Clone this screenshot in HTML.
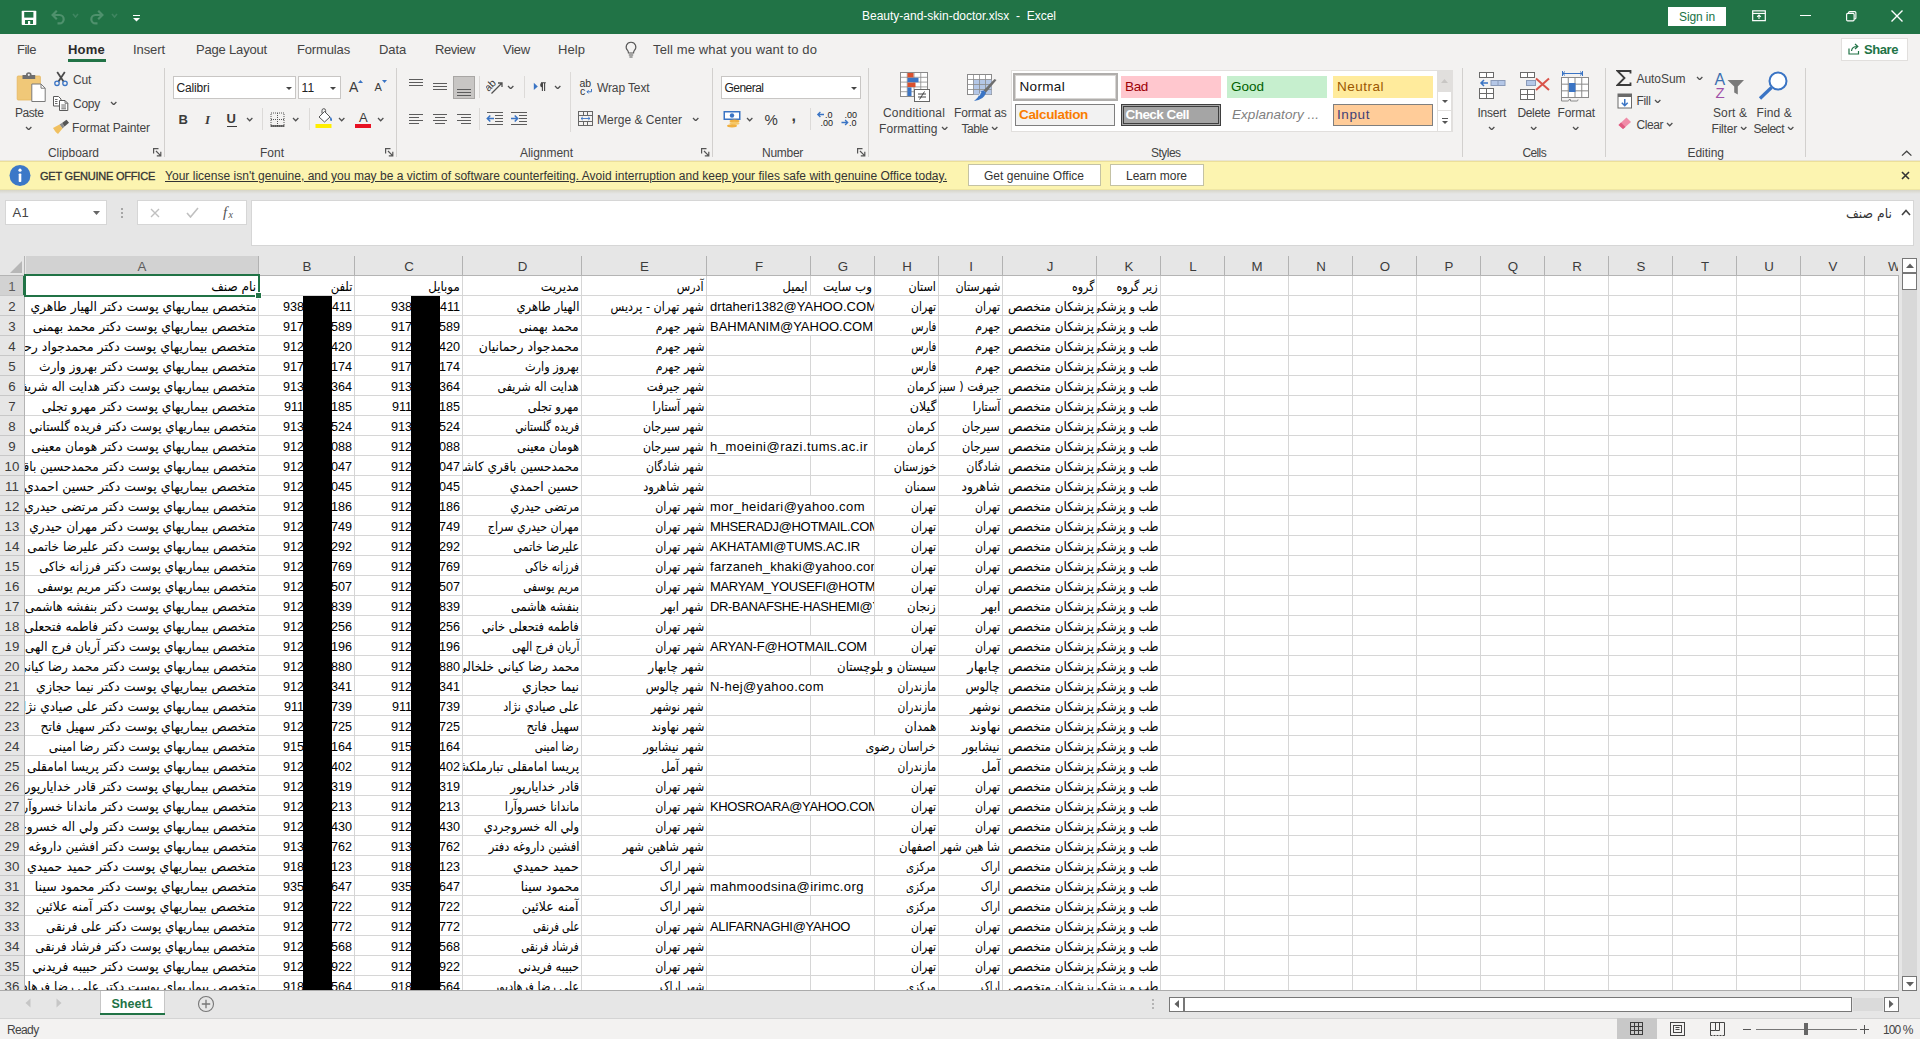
<!DOCTYPE html>
<html lang="en"><head><meta charset="utf-8"><title>Beauty-and-skin-doctor.xlsx - Excel</title>
<style>
html,body{margin:0;padding:0;}
body{width:1920px;height:1039px;overflow:hidden;position:relative;background:#fff;font-family:'Liberation Sans','DejaVu Sans',sans-serif;font-size:12px;color:#444;}
.a{position:absolute;}
.t{white-space:pre;}
.c{position:absolute;overflow:hidden;white-space:pre;}
</style></head>
<body>
<div class="a" style="left:0px;top:0px;width:1920px;height:34px;background:#217346;"></div>
<div class="a" style="left:0px;top:34px;width:1920px;height:127px;background:#f3f2f1;"></div>
<div class="a" style="left:0px;top:160px;width:1920px;height:1px;background:#e8e4d4;"></div>
<div class="a" style="left:0px;top:161px;width:1920px;height:29px;background:#fcf4b0;"></div>
<div class="a" style="left:0px;top:161px;width:1920px;height:1px;background:#ecdf9a;"></div>
<div class="a" style="left:0px;top:189px;width:1920px;height:1px;background:#efe6a4;"></div>
<div class="a" style="left:0px;top:190px;width:1920px;height:66px;background:#e6e6e6;"></div>
<div class="a" style="left:0;top:190px;width:1920px;height:4px;background:linear-gradient(#d6d4c8,#e6e6e6)"></div>
<div class="a" style="left:0px;top:990px;width:1920px;height:28px;background:#e6e6e6;"></div>
<div class="a" style="left:0px;top:990px;width:1899px;height:1px;background:#ababab;"></div>
<div class="a" style="left:0px;top:1018px;width:1920px;height:21px;background:#f3f2f1;"></div>
<div class="a" style="left:0px;top:1018px;width:1920px;height:1px;background:#d4d4d4;"></div>
<div class="a" style="left:0px;top:256px;width:1899px;height:20px;background:#e6e6e6;"></div>
<div class="a" style="left:25px;top:276px;width:1874px;height:714px;background:#fff;"></div>
<div class="a" style="left:0px;top:276px;width:25px;height:714px;background:#e6e6e6;"></div>
<div class="a" style="left:26px;top:256px;width:233px;height:19px;background:#d2d2d2;"></div>
<div class="a" style="left:0px;top:276px;width:24px;height:19px;background:#d2d2d2;"></div>
<div class="a" style="left:25px;top:295px;width:1874px;height:1px;background:#d6d6d6"></div><div class="a" style="left:0;top:295px;width:25px;height:1px;background:#c8c8c8"></div><div class="a" style="left:25px;top:315px;width:1874px;height:1px;background:#d6d6d6"></div><div class="a" style="left:0;top:315px;width:25px;height:1px;background:#c8c8c8"></div><div class="a" style="left:25px;top:335px;width:1874px;height:1px;background:#d6d6d6"></div><div class="a" style="left:0;top:335px;width:25px;height:1px;background:#c8c8c8"></div><div class="a" style="left:25px;top:355px;width:1874px;height:1px;background:#d6d6d6"></div><div class="a" style="left:0;top:355px;width:25px;height:1px;background:#c8c8c8"></div><div class="a" style="left:25px;top:375px;width:1874px;height:1px;background:#d6d6d6"></div><div class="a" style="left:0;top:375px;width:25px;height:1px;background:#c8c8c8"></div><div class="a" style="left:25px;top:395px;width:1874px;height:1px;background:#d6d6d6"></div><div class="a" style="left:0;top:395px;width:25px;height:1px;background:#c8c8c8"></div><div class="a" style="left:25px;top:415px;width:1874px;height:1px;background:#d6d6d6"></div><div class="a" style="left:0;top:415px;width:25px;height:1px;background:#c8c8c8"></div><div class="a" style="left:25px;top:435px;width:1874px;height:1px;background:#d6d6d6"></div><div class="a" style="left:0;top:435px;width:25px;height:1px;background:#c8c8c8"></div><div class="a" style="left:25px;top:455px;width:1874px;height:1px;background:#d6d6d6"></div><div class="a" style="left:0;top:455px;width:25px;height:1px;background:#c8c8c8"></div><div class="a" style="left:25px;top:475px;width:1874px;height:1px;background:#d6d6d6"></div><div class="a" style="left:0;top:475px;width:25px;height:1px;background:#c8c8c8"></div><div class="a" style="left:25px;top:495px;width:1874px;height:1px;background:#d6d6d6"></div><div class="a" style="left:0;top:495px;width:25px;height:1px;background:#c8c8c8"></div><div class="a" style="left:25px;top:515px;width:1874px;height:1px;background:#d6d6d6"></div><div class="a" style="left:0;top:515px;width:25px;height:1px;background:#c8c8c8"></div><div class="a" style="left:25px;top:535px;width:1874px;height:1px;background:#d6d6d6"></div><div class="a" style="left:0;top:535px;width:25px;height:1px;background:#c8c8c8"></div><div class="a" style="left:25px;top:555px;width:1874px;height:1px;background:#d6d6d6"></div><div class="a" style="left:0;top:555px;width:25px;height:1px;background:#c8c8c8"></div><div class="a" style="left:25px;top:575px;width:1874px;height:1px;background:#d6d6d6"></div><div class="a" style="left:0;top:575px;width:25px;height:1px;background:#c8c8c8"></div><div class="a" style="left:25px;top:595px;width:1874px;height:1px;background:#d6d6d6"></div><div class="a" style="left:0;top:595px;width:25px;height:1px;background:#c8c8c8"></div><div class="a" style="left:25px;top:615px;width:1874px;height:1px;background:#d6d6d6"></div><div class="a" style="left:0;top:615px;width:25px;height:1px;background:#c8c8c8"></div><div class="a" style="left:25px;top:635px;width:1874px;height:1px;background:#d6d6d6"></div><div class="a" style="left:0;top:635px;width:25px;height:1px;background:#c8c8c8"></div><div class="a" style="left:25px;top:655px;width:1874px;height:1px;background:#d6d6d6"></div><div class="a" style="left:0;top:655px;width:25px;height:1px;background:#c8c8c8"></div><div class="a" style="left:25px;top:675px;width:1874px;height:1px;background:#d6d6d6"></div><div class="a" style="left:0;top:675px;width:25px;height:1px;background:#c8c8c8"></div><div class="a" style="left:25px;top:695px;width:1874px;height:1px;background:#d6d6d6"></div><div class="a" style="left:0;top:695px;width:25px;height:1px;background:#c8c8c8"></div><div class="a" style="left:25px;top:715px;width:1874px;height:1px;background:#d6d6d6"></div><div class="a" style="left:0;top:715px;width:25px;height:1px;background:#c8c8c8"></div><div class="a" style="left:25px;top:735px;width:1874px;height:1px;background:#d6d6d6"></div><div class="a" style="left:0;top:735px;width:25px;height:1px;background:#c8c8c8"></div><div class="a" style="left:25px;top:755px;width:1874px;height:1px;background:#d6d6d6"></div><div class="a" style="left:0;top:755px;width:25px;height:1px;background:#c8c8c8"></div><div class="a" style="left:25px;top:775px;width:1874px;height:1px;background:#d6d6d6"></div><div class="a" style="left:0;top:775px;width:25px;height:1px;background:#c8c8c8"></div><div class="a" style="left:25px;top:795px;width:1874px;height:1px;background:#d6d6d6"></div><div class="a" style="left:0;top:795px;width:25px;height:1px;background:#c8c8c8"></div><div class="a" style="left:25px;top:815px;width:1874px;height:1px;background:#d6d6d6"></div><div class="a" style="left:0;top:815px;width:25px;height:1px;background:#c8c8c8"></div><div class="a" style="left:25px;top:835px;width:1874px;height:1px;background:#d6d6d6"></div><div class="a" style="left:0;top:835px;width:25px;height:1px;background:#c8c8c8"></div><div class="a" style="left:25px;top:855px;width:1874px;height:1px;background:#d6d6d6"></div><div class="a" style="left:0;top:855px;width:25px;height:1px;background:#c8c8c8"></div><div class="a" style="left:25px;top:875px;width:1874px;height:1px;background:#d6d6d6"></div><div class="a" style="left:0;top:875px;width:25px;height:1px;background:#c8c8c8"></div><div class="a" style="left:25px;top:895px;width:1874px;height:1px;background:#d6d6d6"></div><div class="a" style="left:0;top:895px;width:25px;height:1px;background:#c8c8c8"></div><div class="a" style="left:25px;top:915px;width:1874px;height:1px;background:#d6d6d6"></div><div class="a" style="left:0;top:915px;width:25px;height:1px;background:#c8c8c8"></div><div class="a" style="left:25px;top:935px;width:1874px;height:1px;background:#d6d6d6"></div><div class="a" style="left:0;top:935px;width:25px;height:1px;background:#c8c8c8"></div><div class="a" style="left:25px;top:955px;width:1874px;height:1px;background:#d6d6d6"></div><div class="a" style="left:0;top:955px;width:25px;height:1px;background:#c8c8c8"></div><div class="a" style="left:25px;top:975px;width:1874px;height:1px;background:#d6d6d6"></div><div class="a" style="left:0;top:975px;width:25px;height:1px;background:#c8c8c8"></div><div class="a" style="left:258px;top:276px;width:1px;height:714px;background:#d6d6d6"></div><div class="a" style="left:258px;top:256px;width:1px;height:20px;background:#b2b2b2"></div><div class="a" style="left:354px;top:276px;width:1px;height:714px;background:#d6d6d6"></div><div class="a" style="left:354px;top:256px;width:1px;height:20px;background:#b2b2b2"></div><div class="a" style="left:462px;top:276px;width:1px;height:714px;background:#d6d6d6"></div><div class="a" style="left:462px;top:256px;width:1px;height:20px;background:#b2b2b2"></div><div class="a" style="left:581px;top:276px;width:1px;height:714px;background:#d6d6d6"></div><div class="a" style="left:581px;top:256px;width:1px;height:20px;background:#b2b2b2"></div><div class="a" style="left:706px;top:276px;width:1px;height:714px;background:#d6d6d6"></div><div class="a" style="left:706px;top:256px;width:1px;height:20px;background:#b2b2b2"></div><div class="a" style="left:810px;top:276px;width:1px;height:714px;background:#d6d6d6"></div><div class="a" style="left:810px;top:256px;width:1px;height:20px;background:#b2b2b2"></div><div class="a" style="left:874px;top:276px;width:1px;height:714px;background:#d6d6d6"></div><div class="a" style="left:874px;top:256px;width:1px;height:20px;background:#b2b2b2"></div><div class="a" style="left:938px;top:276px;width:1px;height:714px;background:#d6d6d6"></div><div class="a" style="left:938px;top:256px;width:1px;height:20px;background:#b2b2b2"></div><div class="a" style="left:1002px;top:276px;width:1px;height:714px;background:#d6d6d6"></div><div class="a" style="left:1002px;top:256px;width:1px;height:20px;background:#b2b2b2"></div><div class="a" style="left:1096px;top:276px;width:1px;height:714px;background:#d6d6d6"></div><div class="a" style="left:1096px;top:256px;width:1px;height:20px;background:#b2b2b2"></div><div class="a" style="left:1160px;top:276px;width:1px;height:714px;background:#d6d6d6"></div><div class="a" style="left:1160px;top:256px;width:1px;height:20px;background:#b2b2b2"></div><div class="a" style="left:1224px;top:276px;width:1px;height:714px;background:#d6d6d6"></div><div class="a" style="left:1224px;top:256px;width:1px;height:20px;background:#b2b2b2"></div><div class="a" style="left:1288px;top:276px;width:1px;height:714px;background:#d6d6d6"></div><div class="a" style="left:1288px;top:256px;width:1px;height:20px;background:#b2b2b2"></div><div class="a" style="left:1352px;top:276px;width:1px;height:714px;background:#d6d6d6"></div><div class="a" style="left:1352px;top:256px;width:1px;height:20px;background:#b2b2b2"></div><div class="a" style="left:1416px;top:276px;width:1px;height:714px;background:#d6d6d6"></div><div class="a" style="left:1416px;top:256px;width:1px;height:20px;background:#b2b2b2"></div><div class="a" style="left:1480px;top:276px;width:1px;height:714px;background:#d6d6d6"></div><div class="a" style="left:1480px;top:256px;width:1px;height:20px;background:#b2b2b2"></div><div class="a" style="left:1544px;top:276px;width:1px;height:714px;background:#d6d6d6"></div><div class="a" style="left:1544px;top:256px;width:1px;height:20px;background:#b2b2b2"></div><div class="a" style="left:1608px;top:276px;width:1px;height:714px;background:#d6d6d6"></div><div class="a" style="left:1608px;top:256px;width:1px;height:20px;background:#b2b2b2"></div><div class="a" style="left:1672px;top:276px;width:1px;height:714px;background:#d6d6d6"></div><div class="a" style="left:1672px;top:256px;width:1px;height:20px;background:#b2b2b2"></div><div class="a" style="left:1736px;top:276px;width:1px;height:714px;background:#d6d6d6"></div><div class="a" style="left:1736px;top:256px;width:1px;height:20px;background:#b2b2b2"></div><div class="a" style="left:1800px;top:276px;width:1px;height:714px;background:#d6d6d6"></div><div class="a" style="left:1800px;top:256px;width:1px;height:20px;background:#b2b2b2"></div><div class="a" style="left:1864px;top:276px;width:1px;height:714px;background:#d6d6d6"></div><div class="a" style="left:1864px;top:256px;width:1px;height:20px;background:#b2b2b2"></div>
<div class="a" style="left:0px;top:275px;width:1899px;height:1px;background:#b4b4b4;"></div>
<div class="a" style="left:24px;top:256px;width:1px;height:734px;background:#b4b4b4;"></div>
<svg class="a" style="left:9px;top:260px;" width="14" height="14" viewBox="0 0 14 14"><path d="M13 1 L13 13 L1 13 Z" fill="#b7b7b7"/></svg>
<div class="a t" style="left:25px;top:258px;width:234px;text-align:center;font-size:13.3px;line-height:18px;color:#5c5c5c">A</div>
<div class="a t" style="left:259px;top:258px;width:96px;text-align:center;font-size:13.3px;line-height:18px;color:#3c3c3c">B</div>
<div class="a t" style="left:355px;top:258px;width:108px;text-align:center;font-size:13.3px;line-height:18px;color:#3c3c3c">C</div>
<div class="a t" style="left:463px;top:258px;width:119px;text-align:center;font-size:13.3px;line-height:18px;color:#3c3c3c">D</div>
<div class="a t" style="left:582px;top:258px;width:125px;text-align:center;font-size:13.3px;line-height:18px;color:#3c3c3c">E</div>
<div class="a t" style="left:707px;top:258px;width:104px;text-align:center;font-size:13.3px;line-height:18px;color:#3c3c3c">F</div>
<div class="a t" style="left:811px;top:258px;width:64px;text-align:center;font-size:13.3px;line-height:18px;color:#3c3c3c">G</div>
<div class="a t" style="left:875px;top:258px;width:64px;text-align:center;font-size:13.3px;line-height:18px;color:#3c3c3c">H</div>
<div class="a t" style="left:939px;top:258px;width:64px;text-align:center;font-size:13.3px;line-height:18px;color:#3c3c3c">I</div>
<div class="a t" style="left:1003px;top:258px;width:94px;text-align:center;font-size:13.3px;line-height:18px;color:#3c3c3c">J</div>
<div class="a t" style="left:1097px;top:258px;width:64px;text-align:center;font-size:13.3px;line-height:18px;color:#3c3c3c">K</div>
<div class="a t" style="left:1161px;top:258px;width:64px;text-align:center;font-size:13.3px;line-height:18px;color:#3c3c3c">L</div>
<div class="a t" style="left:1225px;top:258px;width:64px;text-align:center;font-size:13.3px;line-height:18px;color:#3c3c3c">M</div>
<div class="a t" style="left:1289px;top:258px;width:64px;text-align:center;font-size:13.3px;line-height:18px;color:#3c3c3c">N</div>
<div class="a t" style="left:1353px;top:258px;width:64px;text-align:center;font-size:13.3px;line-height:18px;color:#3c3c3c">O</div>
<div class="a t" style="left:1417px;top:258px;width:64px;text-align:center;font-size:13.3px;line-height:18px;color:#3c3c3c">P</div>
<div class="a t" style="left:1481px;top:258px;width:64px;text-align:center;font-size:13.3px;line-height:18px;color:#3c3c3c">Q</div>
<div class="a t" style="left:1545px;top:258px;width:64px;text-align:center;font-size:13.3px;line-height:18px;color:#3c3c3c">R</div>
<div class="a t" style="left:1609px;top:258px;width:64px;text-align:center;font-size:13.3px;line-height:18px;color:#3c3c3c">S</div>
<div class="a t" style="left:1673px;top:258px;width:64px;text-align:center;font-size:13.3px;line-height:18px;color:#3c3c3c">T</div>
<div class="a t" style="left:1737px;top:258px;width:64px;text-align:center;font-size:13.3px;line-height:18px;color:#3c3c3c">U</div>
<div class="a t" style="left:1801px;top:258px;width:64px;text-align:center;font-size:13.3px;line-height:18px;color:#3c3c3c">V</div>
<div class="c" style="left:1866px;top:256px;width:32px;height:19px;"><div class="a t" style="left:22px;top:2px;font-size:13.3px;line-height:18px;color:#444">W</div></div>
<div class="c" style="left:0;top:276px;width:24px;height:19px;text-align:center;font-size:13.3px;line-height:22px;color:#5c5c5c">1</div>
<div class="c" style="left:0;top:296px;width:24px;height:19px;text-align:center;font-size:13.3px;line-height:22px;color:#3c3c3c">2</div>
<div class="c" style="left:0;top:316px;width:24px;height:19px;text-align:center;font-size:13.3px;line-height:22px;color:#3c3c3c">3</div>
<div class="c" style="left:0;top:336px;width:24px;height:19px;text-align:center;font-size:13.3px;line-height:22px;color:#3c3c3c">4</div>
<div class="c" style="left:0;top:356px;width:24px;height:19px;text-align:center;font-size:13.3px;line-height:22px;color:#3c3c3c">5</div>
<div class="c" style="left:0;top:376px;width:24px;height:19px;text-align:center;font-size:13.3px;line-height:22px;color:#3c3c3c">6</div>
<div class="c" style="left:0;top:396px;width:24px;height:19px;text-align:center;font-size:13.3px;line-height:22px;color:#3c3c3c">7</div>
<div class="c" style="left:0;top:416px;width:24px;height:19px;text-align:center;font-size:13.3px;line-height:22px;color:#3c3c3c">8</div>
<div class="c" style="left:0;top:436px;width:24px;height:19px;text-align:center;font-size:13.3px;line-height:22px;color:#3c3c3c">9</div>
<div class="c" style="left:0;top:456px;width:24px;height:19px;text-align:center;font-size:13.3px;line-height:22px;color:#3c3c3c">10</div>
<div class="c" style="left:0;top:476px;width:24px;height:19px;text-align:center;font-size:13.3px;line-height:22px;color:#3c3c3c">11</div>
<div class="c" style="left:0;top:496px;width:24px;height:19px;text-align:center;font-size:13.3px;line-height:22px;color:#3c3c3c">12</div>
<div class="c" style="left:0;top:516px;width:24px;height:19px;text-align:center;font-size:13.3px;line-height:22px;color:#3c3c3c">13</div>
<div class="c" style="left:0;top:536px;width:24px;height:19px;text-align:center;font-size:13.3px;line-height:22px;color:#3c3c3c">14</div>
<div class="c" style="left:0;top:556px;width:24px;height:19px;text-align:center;font-size:13.3px;line-height:22px;color:#3c3c3c">15</div>
<div class="c" style="left:0;top:576px;width:24px;height:19px;text-align:center;font-size:13.3px;line-height:22px;color:#3c3c3c">16</div>
<div class="c" style="left:0;top:596px;width:24px;height:19px;text-align:center;font-size:13.3px;line-height:22px;color:#3c3c3c">17</div>
<div class="c" style="left:0;top:616px;width:24px;height:19px;text-align:center;font-size:13.3px;line-height:22px;color:#3c3c3c">18</div>
<div class="c" style="left:0;top:636px;width:24px;height:19px;text-align:center;font-size:13.3px;line-height:22px;color:#3c3c3c">19</div>
<div class="c" style="left:0;top:656px;width:24px;height:19px;text-align:center;font-size:13.3px;line-height:22px;color:#3c3c3c">20</div>
<div class="c" style="left:0;top:676px;width:24px;height:19px;text-align:center;font-size:13.3px;line-height:22px;color:#3c3c3c">21</div>
<div class="c" style="left:0;top:696px;width:24px;height:19px;text-align:center;font-size:13.3px;line-height:22px;color:#3c3c3c">22</div>
<div class="c" style="left:0;top:716px;width:24px;height:19px;text-align:center;font-size:13.3px;line-height:22px;color:#3c3c3c">23</div>
<div class="c" style="left:0;top:736px;width:24px;height:19px;text-align:center;font-size:13.3px;line-height:22px;color:#3c3c3c">24</div>
<div class="c" style="left:0;top:756px;width:24px;height:19px;text-align:center;font-size:13.3px;line-height:22px;color:#3c3c3c">25</div>
<div class="c" style="left:0;top:776px;width:24px;height:19px;text-align:center;font-size:13.3px;line-height:22px;color:#3c3c3c">26</div>
<div class="c" style="left:0;top:796px;width:24px;height:19px;text-align:center;font-size:13.3px;line-height:22px;color:#3c3c3c">27</div>
<div class="c" style="left:0;top:816px;width:24px;height:19px;text-align:center;font-size:13.3px;line-height:22px;color:#3c3c3c">28</div>
<div class="c" style="left:0;top:836px;width:24px;height:19px;text-align:center;font-size:13.3px;line-height:22px;color:#3c3c3c">29</div>
<div class="c" style="left:0;top:856px;width:24px;height:19px;text-align:center;font-size:13.3px;line-height:22px;color:#3c3c3c">30</div>
<div class="c" style="left:0;top:876px;width:24px;height:19px;text-align:center;font-size:13.3px;line-height:22px;color:#3c3c3c">31</div>
<div class="c" style="left:0;top:896px;width:24px;height:19px;text-align:center;font-size:13.3px;line-height:22px;color:#3c3c3c">32</div>
<div class="c" style="left:0;top:916px;width:24px;height:19px;text-align:center;font-size:13.3px;line-height:22px;color:#3c3c3c">33</div>
<div class="c" style="left:0;top:936px;width:24px;height:19px;text-align:center;font-size:13.3px;line-height:22px;color:#3c3c3c">34</div>
<div class="c" style="left:0;top:956px;width:24px;height:19px;text-align:center;font-size:13.3px;line-height:22px;color:#3c3c3c">35</div>
<div class="c" style="left:0;top:976px;width:24px;height:14px;text-align:center;font-size:13.3px;line-height:22px;color:#3c3c3c">36</div>
<div class="c" style="left:25px;top:276px;width:233px;height:19px"><div class="a t" dir="rtl" style="right:2px;top:1px;font-size:13px;line-height:20px;font-family:'DejaVu Sans','Liberation Sans',sans-serif;color:#000;transform:scaleX(0.9339);transform-origin:right">نام صنف</div></div>
<div class="c" style="left:259px;top:276px;width:95px;height:19px"><div class="a t" dir="rtl" style="right:2px;top:1px;font-size:13px;line-height:20px;font-family:'DejaVu Sans','Liberation Sans',sans-serif;color:#000;transform:scaleX(0.8912);transform-origin:right">تلفن</div></div>
<div class="c" style="left:355px;top:276px;width:107px;height:19px"><div class="a t" dir="rtl" style="right:2px;top:1px;font-size:13px;line-height:20px;font-family:'DejaVu Sans','Liberation Sans',sans-serif;color:#000;transform:scaleX(0.9069);transform-origin:right">موبايل</div></div>
<div class="c" style="left:463px;top:276px;width:118px;height:19px"><div class="a t" dir="rtl" style="right:2px;top:1px;font-size:13px;line-height:20px;font-family:'DejaVu Sans','Liberation Sans',sans-serif;color:#000;transform:scaleX(0.9336);transform-origin:right">مديريت</div></div>
<div class="c" style="left:582px;top:276px;width:124px;height:19px"><div class="a t" dir="rtl" style="right:2px;top:1px;font-size:13px;line-height:20px;font-family:'DejaVu Sans','Liberation Sans',sans-serif;color:#000;transform:scaleX(0.8475);transform-origin:right">آدرس</div></div>
<div class="c" style="left:707px;top:276px;width:103px;height:19px"><div class="a t" dir="rtl" style="right:2px;top:1px;font-size:13px;line-height:20px;font-family:'DejaVu Sans','Liberation Sans',sans-serif;color:#000;transform:scaleX(0.8767);transform-origin:right">ايميل</div></div>
<div class="c" style="left:811px;top:276px;width:63px;height:19px"><div class="a t" dir="rtl" style="right:2px;top:1px;font-size:13px;line-height:20px;font-family:'DejaVu Sans','Liberation Sans',sans-serif;color:#000;transform:scaleX(0.9092);transform-origin:right">وب سايت</div></div>
<div class="c" style="left:875px;top:276px;width:63px;height:19px"><div class="a t" dir="rtl" style="right:2px;top:1px;font-size:13px;line-height:20px;font-family:'DejaVu Sans','Liberation Sans',sans-serif;color:#000;transform:scaleX(0.8611);transform-origin:right">استان</div></div>
<div class="c" style="left:939px;top:276px;width:63px;height:19px"><div class="a t" dir="rtl" style="right:2px;top:1px;font-size:13px;line-height:20px;font-family:'DejaVu Sans','Liberation Sans',sans-serif;color:#000;transform:scaleX(0.8589);transform-origin:right">شهرستان</div></div>
<div class="c" style="left:1003px;top:276px;width:93px;height:19px"><div class="a t" dir="rtl" style="right:2px;top:1px;font-size:13px;line-height:20px;font-family:'DejaVu Sans','Liberation Sans',sans-serif;color:#000;transform:scaleX(0.8506);transform-origin:right">گروه</div></div>
<div class="c" style="left:1097px;top:276px;width:63px;height:19px"><div class="a t" dir="rtl" style="right:2px;top:1px;font-size:13px;line-height:20px;font-family:'DejaVu Sans','Liberation Sans',sans-serif;color:#000;transform:scaleX(0.8656);transform-origin:right">زير گروه</div></div>
<div class="c" style="left:25px;top:296px;width:233px;height:19px"><div class="a t" dir="rtl" style="right:2px;top:1px;font-size:13px;line-height:20px;font-family:'DejaVu Sans','Liberation Sans',sans-serif;color:#000;transform:scaleX(0.9437);transform-origin:right">متخصص بيماريهاي پوست دكتر الهيار طاهري</div></div>
<div class="c" style="left:259px;top:296px;width:95px;height:19px;color:#000;font-size:12.6px;line-height:20px"><span class="a" style="right:50px;top:1px">938</span><span class="a" style="right:2px;top:1px">411</span></div>
<div class="c" style="left:355px;top:296px;width:107px;height:19px;color:#000;font-size:12.6px;line-height:20px"><span class="a" style="right:50px;top:1px">938</span><span class="a" style="right:2px;top:1px">411</span></div>
<div class="c" style="left:463px;top:296px;width:118px;height:19px"><div class="a t" dir="rtl" style="right:2px;top:1px;font-size:13px;line-height:20px;font-family:'DejaVu Sans','Liberation Sans',sans-serif;color:#000;transform:scaleX(0.8952);transform-origin:right">الهيار طاهري</div></div>
<div class="c" style="left:582px;top:296px;width:124px;height:19px"><div class="a t" dir="rtl" style="right:2px;top:1px;font-size:13px;line-height:20px;font-family:'DejaVu Sans','Liberation Sans',sans-serif;color:#000;transform:scaleX(0.8646);transform-origin:right">شهر تهران - پرديس</div></div>
<div class="a" style="left:810px;top:296px;width:1px;height:19px;background:#fff;"></div>
<div class="c" style="left:707px;top:296px;width:167px;height:19px"><div class="a t" style="left:3px;top:1px;font-size:13px;line-height:20px;font-family:'Liberation Sans','DejaVu Sans',sans-serif;color:#000;letter-spacing:0.040px;">drtaheri1382@YAHOO.COM</div></div>
<div class="c" style="left:875px;top:296px;width:63px;height:19px"><div class="a t" dir="rtl" style="right:2px;top:1px;font-size:13px;line-height:20px;font-family:'DejaVu Sans','Liberation Sans',sans-serif;color:#000;transform:scaleX(0.8346);transform-origin:right">تهران</div></div>
<div class="c" style="left:939px;top:296px;width:63px;height:19px"><div class="a t" dir="rtl" style="right:2px;top:1px;font-size:13px;line-height:20px;font-family:'DejaVu Sans','Liberation Sans',sans-serif;color:#000;transform:scaleX(0.8346);transform-origin:right">تهران</div></div>
<div class="c" style="left:1003px;top:296px;width:93px;height:19px"><div class="a t" dir="rtl" style="right:2px;top:1px;font-size:13px;line-height:20px;font-family:'DejaVu Sans','Liberation Sans',sans-serif;color:#000;transform:scaleX(0.9249);transform-origin:right">پزشكان متخصص</div></div>
<div class="c" style="left:1097px;top:296px;width:63px;height:19px"><div class="a t" dir="rtl" style="right:2px;top:1px;font-size:13px;line-height:20px;font-family:'DejaVu Sans','Liberation Sans',sans-serif;color:#000;transform:scaleX(0.86);transform-origin:right">طب و پزشكي</div></div>
<div class="c" style="left:25px;top:316px;width:233px;height:19px"><div class="a t" dir="rtl" style="right:2px;top:1px;font-size:13px;line-height:20px;font-family:'DejaVu Sans','Liberation Sans',sans-serif;color:#000;transform:scaleX(0.9496);transform-origin:right">متخصص بيماريهاي پوست دكتر محمد بهمنی</div></div>
<div class="c" style="left:259px;top:316px;width:95px;height:19px;color:#000;font-size:12.6px;line-height:20px"><span class="a" style="right:50px;top:1px">917</span><span class="a" style="right:2px;top:1px">589</span></div>
<div class="c" style="left:355px;top:316px;width:107px;height:19px;color:#000;font-size:12.6px;line-height:20px"><span class="a" style="right:50px;top:1px">917</span><span class="a" style="right:2px;top:1px">589</span></div>
<div class="c" style="left:463px;top:316px;width:118px;height:19px"><div class="a t" dir="rtl" style="right:2px;top:1px;font-size:13px;line-height:20px;font-family:'DejaVu Sans','Liberation Sans',sans-serif;color:#000;transform:scaleX(0.913);transform-origin:right">محمد بهمنی</div></div>
<div class="c" style="left:582px;top:316px;width:124px;height:19px"><div class="a t" dir="rtl" style="right:2px;top:1px;font-size:13px;line-height:20px;font-family:'DejaVu Sans','Liberation Sans',sans-serif;color:#000;transform:scaleX(0.8485);transform-origin:right">شهر جهرم</div></div>
<div class="a" style="left:810px;top:316px;width:1px;height:19px;background:#fff;"></div>
<div class="c" style="left:707px;top:316px;width:167px;height:19px"><div class="a t" style="left:3px;top:1px;font-size:13px;line-height:20px;font-family:'Liberation Sans','DejaVu Sans',sans-serif;color:#000;letter-spacing:-0.010px;">BAHMANIM@YAHOO.COM</div></div>
<div class="c" style="left:875px;top:316px;width:63px;height:19px"><div class="a t" dir="rtl" style="right:2px;top:1px;font-size:13px;line-height:20px;font-family:'DejaVu Sans','Liberation Sans',sans-serif;color:#000;transform:scaleX(0.7733);transform-origin:right">فارس</div></div>
<div class="c" style="left:939px;top:316px;width:63px;height:19px"><div class="a t" dir="rtl" style="right:2px;top:1px;font-size:13px;line-height:20px;font-family:'DejaVu Sans','Liberation Sans',sans-serif;color:#000;transform:scaleX(0.8547);transform-origin:right">جهرم</div></div>
<div class="c" style="left:1003px;top:316px;width:93px;height:19px"><div class="a t" dir="rtl" style="right:2px;top:1px;font-size:13px;line-height:20px;font-family:'DejaVu Sans','Liberation Sans',sans-serif;color:#000;transform:scaleX(0.9249);transform-origin:right">پزشكان متخصص</div></div>
<div class="c" style="left:1097px;top:316px;width:63px;height:19px"><div class="a t" dir="rtl" style="right:2px;top:1px;font-size:13px;line-height:20px;font-family:'DejaVu Sans','Liberation Sans',sans-serif;color:#000;transform:scaleX(0.86);transform-origin:right">طب و پزشكي</div></div>
<div class="c" style="left:25px;top:336px;width:233px;height:19px"><div class="a t" dir="rtl" style="right:2px;top:1px;font-size:13px;line-height:20px;font-family:'DejaVu Sans','Liberation Sans',sans-serif;color:#000;transform:scaleX(0.9601);transform-origin:right">متخصص بيماريهاي پوست دكتر محمدجواد رحمانيان</div></div>
<div class="c" style="left:259px;top:336px;width:95px;height:19px;color:#000;font-size:12.6px;line-height:20px"><span class="a" style="right:50px;top:1px">912</span><span class="a" style="right:2px;top:1px">420</span></div>
<div class="c" style="left:355px;top:336px;width:107px;height:19px;color:#000;font-size:12.6px;line-height:20px"><span class="a" style="right:50px;top:1px">912</span><span class="a" style="right:2px;top:1px">420</span></div>
<div class="c" style="left:463px;top:336px;width:118px;height:19px"><div class="a t" dir="rtl" style="right:2px;top:1px;font-size:13px;line-height:20px;font-family:'DejaVu Sans','Liberation Sans',sans-serif;color:#000;transform:scaleX(0.9539);transform-origin:right">محمدجواد رحمانيان</div></div>
<div class="c" style="left:582px;top:336px;width:124px;height:19px"><div class="a t" dir="rtl" style="right:2px;top:1px;font-size:13px;line-height:20px;font-family:'DejaVu Sans','Liberation Sans',sans-serif;color:#000;transform:scaleX(0.8485);transform-origin:right">شهر جهرم</div></div>
<div class="c" style="left:707px;top:336px;width:231px;height:19px"><div class="a t" dir="rtl" style="right:2px;top:1px;font-size:13px;line-height:20px;font-family:'DejaVu Sans','Liberation Sans',sans-serif;color:#000;transform:scaleX(0.7733);transform-origin:right">فارس</div></div>
<div class="c" style="left:939px;top:336px;width:63px;height:19px"><div class="a t" dir="rtl" style="right:2px;top:1px;font-size:13px;line-height:20px;font-family:'DejaVu Sans','Liberation Sans',sans-serif;color:#000;transform:scaleX(0.8547);transform-origin:right">جهرم</div></div>
<div class="c" style="left:1003px;top:336px;width:93px;height:19px"><div class="a t" dir="rtl" style="right:2px;top:1px;font-size:13px;line-height:20px;font-family:'DejaVu Sans','Liberation Sans',sans-serif;color:#000;transform:scaleX(0.9249);transform-origin:right">پزشكان متخصص</div></div>
<div class="c" style="left:1097px;top:336px;width:63px;height:19px"><div class="a t" dir="rtl" style="right:2px;top:1px;font-size:13px;line-height:20px;font-family:'DejaVu Sans','Liberation Sans',sans-serif;color:#000;transform:scaleX(0.86);transform-origin:right">طب و پزشكي</div></div>
<div class="c" style="left:25px;top:356px;width:233px;height:19px"><div class="a t" dir="rtl" style="right:2px;top:1px;font-size:13px;line-height:20px;font-family:'DejaVu Sans','Liberation Sans',sans-serif;color:#000;transform:scaleX(0.9394);transform-origin:right">متخصص بيماريهاي پوست دكتر بهروز وارث</div></div>
<div class="c" style="left:259px;top:356px;width:95px;height:19px;color:#000;font-size:12.6px;line-height:20px"><span class="a" style="right:50px;top:1px">917</span><span class="a" style="right:2px;top:1px">174</span></div>
<div class="c" style="left:355px;top:356px;width:107px;height:19px;color:#000;font-size:12.6px;line-height:20px"><span class="a" style="right:50px;top:1px">917</span><span class="a" style="right:2px;top:1px">174</span></div>
<div class="c" style="left:463px;top:356px;width:118px;height:19px"><div class="a t" dir="rtl" style="right:2px;top:1px;font-size:13px;line-height:20px;font-family:'DejaVu Sans','Liberation Sans',sans-serif;color:#000;transform:scaleX(0.8725);transform-origin:right">بهروز وارث</div></div>
<div class="c" style="left:582px;top:356px;width:124px;height:19px"><div class="a t" dir="rtl" style="right:2px;top:1px;font-size:13px;line-height:20px;font-family:'DejaVu Sans','Liberation Sans',sans-serif;color:#000;transform:scaleX(0.8485);transform-origin:right">شهر جهرم</div></div>
<div class="c" style="left:707px;top:356px;width:231px;height:19px"><div class="a t" dir="rtl" style="right:2px;top:1px;font-size:13px;line-height:20px;font-family:'DejaVu Sans','Liberation Sans',sans-serif;color:#000;transform:scaleX(0.7733);transform-origin:right">فارس</div></div>
<div class="c" style="left:939px;top:356px;width:63px;height:19px"><div class="a t" dir="rtl" style="right:2px;top:1px;font-size:13px;line-height:20px;font-family:'DejaVu Sans','Liberation Sans',sans-serif;color:#000;transform:scaleX(0.8547);transform-origin:right">جهرم</div></div>
<div class="c" style="left:1003px;top:356px;width:93px;height:19px"><div class="a t" dir="rtl" style="right:2px;top:1px;font-size:13px;line-height:20px;font-family:'DejaVu Sans','Liberation Sans',sans-serif;color:#000;transform:scaleX(0.9249);transform-origin:right">پزشكان متخصص</div></div>
<div class="c" style="left:1097px;top:356px;width:63px;height:19px"><div class="a t" dir="rtl" style="right:2px;top:1px;font-size:13px;line-height:20px;font-family:'DejaVu Sans','Liberation Sans',sans-serif;color:#000;transform:scaleX(0.86);transform-origin:right">طب و پزشكي</div></div>
<div class="c" style="left:25px;top:376px;width:233px;height:19px"><div class="a t" dir="rtl" style="right:2px;top:1px;font-size:13px;line-height:20px;font-family:'DejaVu Sans','Liberation Sans',sans-serif;color:#000;transform:scaleX(0.9218);transform-origin:right">متخصص بيماريهاي پوست دكتر هدايت اله شريفی</div></div>
<div class="c" style="left:259px;top:376px;width:95px;height:19px;color:#000;font-size:12.6px;line-height:20px"><span class="a" style="right:50px;top:1px">913</span><span class="a" style="right:2px;top:1px">364</span></div>
<div class="c" style="left:355px;top:376px;width:107px;height:19px;color:#000;font-size:12.6px;line-height:20px"><span class="a" style="right:50px;top:1px">913</span><span class="a" style="right:2px;top:1px">364</span></div>
<div class="c" style="left:463px;top:376px;width:118px;height:19px"><div class="a t" dir="rtl" style="right:2px;top:1px;font-size:13px;line-height:20px;font-family:'DejaVu Sans','Liberation Sans',sans-serif;color:#000;transform:scaleX(0.8475);transform-origin:right">هدايت اله شريفی</div></div>
<div class="c" style="left:582px;top:376px;width:124px;height:19px"><div class="a t" dir="rtl" style="right:2px;top:1px;font-size:13px;line-height:20px;font-family:'DejaVu Sans','Liberation Sans',sans-serif;color:#000;transform:scaleX(0.8671);transform-origin:right">شهر جيرفت</div></div>
<div class="c" style="left:707px;top:376px;width:231px;height:19px"><div class="a t" dir="rtl" style="right:2px;top:1px;font-size:13px;line-height:20px;font-family:'DejaVu Sans','Liberation Sans',sans-serif;color:#000;transform:scaleX(0.8495);transform-origin:right">کرمان</div></div>
<div class="c" style="left:939px;top:376px;width:63px;height:19px"><div class="a t" dir="rtl" style="right:2px;top:1px;font-size:13px;line-height:20px;font-family:'DejaVu Sans','Liberation Sans',sans-serif;color:#000;transform:scaleX(0.86);transform-origin:right">جيرفت ( سبزواران )</div></div>
<div class="c" style="left:1003px;top:376px;width:93px;height:19px"><div class="a t" dir="rtl" style="right:2px;top:1px;font-size:13px;line-height:20px;font-family:'DejaVu Sans','Liberation Sans',sans-serif;color:#000;transform:scaleX(0.9249);transform-origin:right">پزشكان متخصص</div></div>
<div class="c" style="left:1097px;top:376px;width:63px;height:19px"><div class="a t" dir="rtl" style="right:2px;top:1px;font-size:13px;line-height:20px;font-family:'DejaVu Sans','Liberation Sans',sans-serif;color:#000;transform:scaleX(0.86);transform-origin:right">طب و پزشكي</div></div>
<div class="c" style="left:25px;top:396px;width:233px;height:19px"><div class="a t" dir="rtl" style="right:2px;top:1px;font-size:13px;line-height:20px;font-family:'DejaVu Sans','Liberation Sans',sans-serif;color:#000;transform:scaleX(0.9435);transform-origin:right">متخصص بيماريهاي پوست دكتر مهرو تجلی</div></div>
<div class="c" style="left:259px;top:396px;width:95px;height:19px;color:#000;font-size:12.6px;line-height:20px"><span class="a" style="right:50px;top:1px">911</span><span class="a" style="right:2px;top:1px">185</span></div>
<div class="c" style="left:355px;top:396px;width:107px;height:19px;color:#000;font-size:12.6px;line-height:20px"><span class="a" style="right:50px;top:1px">911</span><span class="a" style="right:2px;top:1px">185</span></div>
<div class="c" style="left:463px;top:396px;width:118px;height:19px"><div class="a t" dir="rtl" style="right:2px;top:1px;font-size:13px;line-height:20px;font-family:'DejaVu Sans','Liberation Sans',sans-serif;color:#000;transform:scaleX(0.8841);transform-origin:right">مهرو تجلی</div></div>
<div class="c" style="left:582px;top:396px;width:124px;height:19px"><div class="a t" dir="rtl" style="right:2px;top:1px;font-size:13px;line-height:20px;font-family:'DejaVu Sans','Liberation Sans',sans-serif;color:#000;transform:scaleX(0.8599);transform-origin:right">شهر آستارا</div></div>
<div class="c" style="left:707px;top:396px;width:231px;height:19px"><div class="a t" dir="rtl" style="right:2px;top:1px;font-size:13px;line-height:20px;font-family:'DejaVu Sans','Liberation Sans',sans-serif;color:#000;transform:scaleX(0.9755);transform-origin:right">گيلان</div></div>
<div class="c" style="left:939px;top:396px;width:63px;height:19px"><div class="a t" dir="rtl" style="right:2px;top:1px;font-size:13px;line-height:20px;font-family:'DejaVu Sans','Liberation Sans',sans-serif;color:#000;transform:scaleX(0.8519);transform-origin:right">آستارا</div></div>
<div class="c" style="left:1003px;top:396px;width:93px;height:19px"><div class="a t" dir="rtl" style="right:2px;top:1px;font-size:13px;line-height:20px;font-family:'DejaVu Sans','Liberation Sans',sans-serif;color:#000;transform:scaleX(0.9249);transform-origin:right">پزشكان متخصص</div></div>
<div class="c" style="left:1097px;top:396px;width:63px;height:19px"><div class="a t" dir="rtl" style="right:2px;top:1px;font-size:13px;line-height:20px;font-family:'DejaVu Sans','Liberation Sans',sans-serif;color:#000;transform:scaleX(0.86);transform-origin:right">طب و پزشكي</div></div>
<div class="c" style="left:25px;top:416px;width:233px;height:19px"><div class="a t" dir="rtl" style="right:2px;top:1px;font-size:13px;line-height:20px;font-family:'DejaVu Sans','Liberation Sans',sans-serif;color:#000;transform:scaleX(0.9141);transform-origin:right">متخصص بيماريهاي پوست دكتر فريده گلستاني</div></div>
<div class="c" style="left:259px;top:416px;width:95px;height:19px;color:#000;font-size:12.6px;line-height:20px"><span class="a" style="right:50px;top:1px">913</span><span class="a" style="right:2px;top:1px">524</span></div>
<div class="c" style="left:355px;top:416px;width:107px;height:19px;color:#000;font-size:12.6px;line-height:20px"><span class="a" style="right:50px;top:1px">913</span><span class="a" style="right:2px;top:1px">524</span></div>
<div class="c" style="left:463px;top:416px;width:118px;height:19px"><div class="a t" dir="rtl" style="right:2px;top:1px;font-size:13px;line-height:20px;font-family:'DejaVu Sans','Liberation Sans',sans-serif;color:#000;transform:scaleX(0.808);transform-origin:right">فريده گلستاني</div></div>
<div class="c" style="left:582px;top:416px;width:124px;height:19px"><div class="a t" dir="rtl" style="right:2px;top:1px;font-size:13px;line-height:20px;font-family:'DejaVu Sans','Liberation Sans',sans-serif;color:#000;transform:scaleX(0.8469);transform-origin:right">شهر سيرجان</div></div>
<div class="c" style="left:707px;top:416px;width:231px;height:19px"><div class="a t" dir="rtl" style="right:2px;top:1px;font-size:13px;line-height:20px;font-family:'DejaVu Sans','Liberation Sans',sans-serif;color:#000;transform:scaleX(0.8495);transform-origin:right">کرمان</div></div>
<div class="c" style="left:939px;top:416px;width:63px;height:19px"><div class="a t" dir="rtl" style="right:2px;top:1px;font-size:13px;line-height:20px;font-family:'DejaVu Sans','Liberation Sans',sans-serif;color:#000;transform:scaleX(0.8611);transform-origin:right">سيرجان</div></div>
<div class="c" style="left:1003px;top:416px;width:93px;height:19px"><div class="a t" dir="rtl" style="right:2px;top:1px;font-size:13px;line-height:20px;font-family:'DejaVu Sans','Liberation Sans',sans-serif;color:#000;transform:scaleX(0.9249);transform-origin:right">پزشكان متخصص</div></div>
<div class="c" style="left:1097px;top:416px;width:63px;height:19px"><div class="a t" dir="rtl" style="right:2px;top:1px;font-size:13px;line-height:20px;font-family:'DejaVu Sans','Liberation Sans',sans-serif;color:#000;transform:scaleX(0.86);transform-origin:right">طب و پزشكي</div></div>
<div class="c" style="left:25px;top:436px;width:233px;height:19px"><div class="a t" dir="rtl" style="right:2px;top:1px;font-size:13px;line-height:20px;font-family:'DejaVu Sans','Liberation Sans',sans-serif;color:#000;transform:scaleX(0.9406);transform-origin:right">متخصص بيماريهاي پوست دكتر هومان معينی</div></div>
<div class="c" style="left:259px;top:436px;width:95px;height:19px;color:#000;font-size:12.6px;line-height:20px"><span class="a" style="right:50px;top:1px">912</span><span class="a" style="right:2px;top:1px">088</span></div>
<div class="c" style="left:355px;top:436px;width:107px;height:19px;color:#000;font-size:12.6px;line-height:20px"><span class="a" style="right:50px;top:1px">912</span><span class="a" style="right:2px;top:1px">088</span></div>
<div class="c" style="left:463px;top:436px;width:118px;height:19px"><div class="a t" dir="rtl" style="right:2px;top:1px;font-size:13px;line-height:20px;font-family:'DejaVu Sans','Liberation Sans',sans-serif;color:#000;transform:scaleX(0.8845);transform-origin:right">هومان معينی</div></div>
<div class="c" style="left:582px;top:436px;width:124px;height:19px"><div class="a t" dir="rtl" style="right:2px;top:1px;font-size:13px;line-height:20px;font-family:'DejaVu Sans','Liberation Sans',sans-serif;color:#000;transform:scaleX(0.8469);transform-origin:right">شهر سيرجان</div></div>
<div class="a" style="left:810px;top:436px;width:1px;height:19px;background:#fff;"></div>
<div class="c" style="left:707px;top:436px;width:167px;height:19px"><div class="a t" style="left:3px;top:1px;font-size:13px;line-height:20px;font-family:'Liberation Sans','DejaVu Sans',sans-serif;color:#000;letter-spacing:0.464px;">h_moeini@razi.tums.ac.ir</div></div>
<div class="c" style="left:875px;top:436px;width:63px;height:19px"><div class="a t" dir="rtl" style="right:2px;top:1px;font-size:13px;line-height:20px;font-family:'DejaVu Sans','Liberation Sans',sans-serif;color:#000;transform:scaleX(0.8495);transform-origin:right">کرمان</div></div>
<div class="c" style="left:939px;top:436px;width:63px;height:19px"><div class="a t" dir="rtl" style="right:2px;top:1px;font-size:13px;line-height:20px;font-family:'DejaVu Sans','Liberation Sans',sans-serif;color:#000;transform:scaleX(0.8611);transform-origin:right">سيرجان</div></div>
<div class="c" style="left:1003px;top:436px;width:93px;height:19px"><div class="a t" dir="rtl" style="right:2px;top:1px;font-size:13px;line-height:20px;font-family:'DejaVu Sans','Liberation Sans',sans-serif;color:#000;transform:scaleX(0.9249);transform-origin:right">پزشكان متخصص</div></div>
<div class="c" style="left:1097px;top:436px;width:63px;height:19px"><div class="a t" dir="rtl" style="right:2px;top:1px;font-size:13px;line-height:20px;font-family:'DejaVu Sans','Liberation Sans',sans-serif;color:#000;transform:scaleX(0.86);transform-origin:right">طب و پزشكي</div></div>
<div class="c" style="left:25px;top:456px;width:233px;height:19px"><div class="a t" dir="rtl" style="right:2px;top:1px;font-size:13px;line-height:20px;font-family:'DejaVu Sans','Liberation Sans',sans-serif;color:#000;transform:scaleX(0.93);transform-origin:right">متخصص بيماريهاي پوست دكتر محمدحسين باقري كاشاني</div></div>
<div class="c" style="left:259px;top:456px;width:95px;height:19px;color:#000;font-size:12.6px;line-height:20px"><span class="a" style="right:50px;top:1px">912</span><span class="a" style="right:2px;top:1px">047</span></div>
<div class="c" style="left:355px;top:456px;width:107px;height:19px;color:#000;font-size:12.6px;line-height:20px"><span class="a" style="right:50px;top:1px">912</span><span class="a" style="right:2px;top:1px">047</span></div>
<div class="c" style="left:463px;top:456px;width:118px;height:19px"><div class="a t" dir="rtl" style="right:2px;top:1px;font-size:13px;line-height:20px;font-family:'DejaVu Sans','Liberation Sans',sans-serif;color:#000;transform:scaleX(0.93);transform-origin:right">محمدحسين باقري كاشاني</div></div>
<div class="c" style="left:582px;top:456px;width:124px;height:19px"><div class="a t" dir="rtl" style="right:2px;top:1px;font-size:13px;line-height:20px;font-family:'DejaVu Sans','Liberation Sans',sans-serif;color:#000;transform:scaleX(0.839);transform-origin:right">شهر شادگان</div></div>
<div class="c" style="left:707px;top:456px;width:231px;height:19px"><div class="a t" dir="rtl" style="right:2px;top:1px;font-size:13px;line-height:20px;font-family:'DejaVu Sans','Liberation Sans',sans-serif;color:#000;transform:scaleX(0.861);transform-origin:right">خوزستان</div></div>
<div class="c" style="left:939px;top:456px;width:63px;height:19px"><div class="a t" dir="rtl" style="right:2px;top:1px;font-size:13px;line-height:20px;font-family:'DejaVu Sans','Liberation Sans',sans-serif;color:#000;transform:scaleX(0.8428);transform-origin:right">شادگان</div></div>
<div class="c" style="left:1003px;top:456px;width:93px;height:19px"><div class="a t" dir="rtl" style="right:2px;top:1px;font-size:13px;line-height:20px;font-family:'DejaVu Sans','Liberation Sans',sans-serif;color:#000;transform:scaleX(0.9249);transform-origin:right">پزشكان متخصص</div></div>
<div class="c" style="left:1097px;top:456px;width:63px;height:19px"><div class="a t" dir="rtl" style="right:2px;top:1px;font-size:13px;line-height:20px;font-family:'DejaVu Sans','Liberation Sans',sans-serif;color:#000;transform:scaleX(0.86);transform-origin:right">طب و پزشكي</div></div>
<div class="c" style="left:25px;top:476px;width:233px;height:19px"><div class="a t" dir="rtl" style="right:2px;top:1px;font-size:13px;line-height:20px;font-family:'DejaVu Sans','Liberation Sans',sans-serif;color:#000;transform:scaleX(0.9552);transform-origin:right">متخصص بيماريهاي پوست دكتر حسين احمدي</div></div>
<div class="c" style="left:259px;top:476px;width:95px;height:19px;color:#000;font-size:12.6px;line-height:20px"><span class="a" style="right:50px;top:1px">912</span><span class="a" style="right:2px;top:1px">045</span></div>
<div class="c" style="left:355px;top:476px;width:107px;height:19px;color:#000;font-size:12.6px;line-height:20px"><span class="a" style="right:50px;top:1px">912</span><span class="a" style="right:2px;top:1px">045</span></div>
<div class="c" style="left:463px;top:476px;width:118px;height:19px"><div class="a t" dir="rtl" style="right:2px;top:1px;font-size:13px;line-height:20px;font-family:'DejaVu Sans','Liberation Sans',sans-serif;color:#000;transform:scaleX(0.9356);transform-origin:right">حسين احمدي</div></div>
<div class="c" style="left:582px;top:476px;width:124px;height:19px"><div class="a t" dir="rtl" style="right:2px;top:1px;font-size:13px;line-height:20px;font-family:'DejaVu Sans','Liberation Sans',sans-serif;color:#000;transform:scaleX(0.8823);transform-origin:right">شهر شاهرود</div></div>
<div class="c" style="left:707px;top:476px;width:231px;height:19px"><div class="a t" dir="rtl" style="right:2px;top:1px;font-size:13px;line-height:20px;font-family:'DejaVu Sans','Liberation Sans',sans-serif;color:#000;transform:scaleX(0.8649);transform-origin:right">سمنان</div></div>
<div class="c" style="left:939px;top:476px;width:63px;height:19px"><div class="a t" dir="rtl" style="right:2px;top:1px;font-size:13px;line-height:20px;font-family:'DejaVu Sans','Liberation Sans',sans-serif;color:#000;transform:scaleX(0.9401);transform-origin:right">شاهرود</div></div>
<div class="c" style="left:1003px;top:476px;width:93px;height:19px"><div class="a t" dir="rtl" style="right:2px;top:1px;font-size:13px;line-height:20px;font-family:'DejaVu Sans','Liberation Sans',sans-serif;color:#000;transform:scaleX(0.9249);transform-origin:right">پزشكان متخصص</div></div>
<div class="c" style="left:1097px;top:476px;width:63px;height:19px"><div class="a t" dir="rtl" style="right:2px;top:1px;font-size:13px;line-height:20px;font-family:'DejaVu Sans','Liberation Sans',sans-serif;color:#000;transform:scaleX(0.86);transform-origin:right">طب و پزشكي</div></div>
<div class="c" style="left:25px;top:496px;width:233px;height:19px"><div class="a t" dir="rtl" style="right:2px;top:1px;font-size:13px;line-height:20px;font-family:'DejaVu Sans','Liberation Sans',sans-serif;color:#000;transform:scaleX(0.9341);transform-origin:right">متخصص بيماريهاي پوست دكتر مرتضی حيدري</div></div>
<div class="c" style="left:259px;top:496px;width:95px;height:19px;color:#000;font-size:12.6px;line-height:20px"><span class="a" style="right:50px;top:1px">912</span><span class="a" style="right:2px;top:1px">186</span></div>
<div class="c" style="left:355px;top:496px;width:107px;height:19px;color:#000;font-size:12.6px;line-height:20px"><span class="a" style="right:50px;top:1px">912</span><span class="a" style="right:2px;top:1px">186</span></div>
<div class="c" style="left:463px;top:496px;width:118px;height:19px"><div class="a t" dir="rtl" style="right:2px;top:1px;font-size:13px;line-height:20px;font-family:'DejaVu Sans','Liberation Sans',sans-serif;color:#000;transform:scaleX(0.8708);transform-origin:right">مرتضی حيدري</div></div>
<div class="c" style="left:582px;top:496px;width:124px;height:19px"><div class="a t" dir="rtl" style="right:2px;top:1px;font-size:13px;line-height:20px;font-family:'DejaVu Sans','Liberation Sans',sans-serif;color:#000;transform:scaleX(0.8428);transform-origin:right">شهر تهران</div></div>
<div class="a" style="left:810px;top:496px;width:1px;height:19px;background:#fff;"></div>
<div class="c" style="left:707px;top:496px;width:167px;height:19px"><div class="a t" style="left:3px;top:1px;font-size:13px;line-height:20px;font-family:'Liberation Sans','DejaVu Sans',sans-serif;color:#000;letter-spacing:0.455px;">mor_heidari@yahoo.com</div></div>
<div class="c" style="left:875px;top:496px;width:63px;height:19px"><div class="a t" dir="rtl" style="right:2px;top:1px;font-size:13px;line-height:20px;font-family:'DejaVu Sans','Liberation Sans',sans-serif;color:#000;transform:scaleX(0.8346);transform-origin:right">تهران</div></div>
<div class="c" style="left:939px;top:496px;width:63px;height:19px"><div class="a t" dir="rtl" style="right:2px;top:1px;font-size:13px;line-height:20px;font-family:'DejaVu Sans','Liberation Sans',sans-serif;color:#000;transform:scaleX(0.8346);transform-origin:right">تهران</div></div>
<div class="c" style="left:1003px;top:496px;width:93px;height:19px"><div class="a t" dir="rtl" style="right:2px;top:1px;font-size:13px;line-height:20px;font-family:'DejaVu Sans','Liberation Sans',sans-serif;color:#000;transform:scaleX(0.9249);transform-origin:right">پزشكان متخصص</div></div>
<div class="c" style="left:1097px;top:496px;width:63px;height:19px"><div class="a t" dir="rtl" style="right:2px;top:1px;font-size:13px;line-height:20px;font-family:'DejaVu Sans','Liberation Sans',sans-serif;color:#000;transform:scaleX(0.86);transform-origin:right">طب و پزشكي</div></div>
<div class="c" style="left:25px;top:516px;width:233px;height:19px"><div class="a t" dir="rtl" style="right:2px;top:1px;font-size:13px;line-height:20px;font-family:'DejaVu Sans','Liberation Sans',sans-serif;color:#000;transform:scaleX(0.9368);transform-origin:right">متخصص بيماريهاي پوست دكتر مهران حيدري</div></div>
<div class="c" style="left:259px;top:516px;width:95px;height:19px;color:#000;font-size:12.6px;line-height:20px"><span class="a" style="right:50px;top:1px">912</span><span class="a" style="right:2px;top:1px">749</span></div>
<div class="c" style="left:355px;top:516px;width:107px;height:19px;color:#000;font-size:12.6px;line-height:20px"><span class="a" style="right:50px;top:1px">912</span><span class="a" style="right:2px;top:1px">749</span></div>
<div class="c" style="left:463px;top:516px;width:118px;height:19px"><div class="a t" dir="rtl" style="right:2px;top:1px;font-size:13px;line-height:20px;font-family:'DejaVu Sans','Liberation Sans',sans-serif;color:#000;transform:scaleX(0.8516);transform-origin:right">مهران حيدري سراج</div></div>
<div class="c" style="left:582px;top:516px;width:124px;height:19px"><div class="a t" dir="rtl" style="right:2px;top:1px;font-size:13px;line-height:20px;font-family:'DejaVu Sans','Liberation Sans',sans-serif;color:#000;transform:scaleX(0.8428);transform-origin:right">شهر تهران</div></div>
<div class="a" style="left:810px;top:516px;width:1px;height:19px;background:#fff;"></div>
<div class="c" style="left:707px;top:516px;width:167px;height:19px"><div class="a t" style="left:3px;top:1px;font-size:13px;line-height:20px;font-family:'Liberation Sans','DejaVu Sans',sans-serif;color:#000;letter-spacing:-0.347px;">MHSERADJ@HOTMAIL.COM</div></div>
<div class="c" style="left:875px;top:516px;width:63px;height:19px"><div class="a t" dir="rtl" style="right:2px;top:1px;font-size:13px;line-height:20px;font-family:'DejaVu Sans','Liberation Sans',sans-serif;color:#000;transform:scaleX(0.8346);transform-origin:right">تهران</div></div>
<div class="c" style="left:939px;top:516px;width:63px;height:19px"><div class="a t" dir="rtl" style="right:2px;top:1px;font-size:13px;line-height:20px;font-family:'DejaVu Sans','Liberation Sans',sans-serif;color:#000;transform:scaleX(0.8346);transform-origin:right">تهران</div></div>
<div class="c" style="left:1003px;top:516px;width:93px;height:19px"><div class="a t" dir="rtl" style="right:2px;top:1px;font-size:13px;line-height:20px;font-family:'DejaVu Sans','Liberation Sans',sans-serif;color:#000;transform:scaleX(0.9249);transform-origin:right">پزشكان متخصص</div></div>
<div class="c" style="left:1097px;top:516px;width:63px;height:19px"><div class="a t" dir="rtl" style="right:2px;top:1px;font-size:13px;line-height:20px;font-family:'DejaVu Sans','Liberation Sans',sans-serif;color:#000;transform:scaleX(0.86);transform-origin:right">طب و پزشكي</div></div>
<div class="c" style="left:25px;top:536px;width:233px;height:19px"><div class="a t" dir="rtl" style="right:2px;top:1px;font-size:13px;line-height:20px;font-family:'DejaVu Sans','Liberation Sans',sans-serif;color:#000;transform:scaleX(0.9333);transform-origin:right">متخصص بيماريهاي پوست دكتر عليرضا خاتمی</div></div>
<div class="c" style="left:259px;top:536px;width:95px;height:19px;color:#000;font-size:12.6px;line-height:20px"><span class="a" style="right:50px;top:1px">912</span><span class="a" style="right:2px;top:1px">292</span></div>
<div class="c" style="left:355px;top:536px;width:107px;height:19px;color:#000;font-size:12.6px;line-height:20px"><span class="a" style="right:50px;top:1px">912</span><span class="a" style="right:2px;top:1px">292</span></div>
<div class="c" style="left:463px;top:536px;width:118px;height:19px"><div class="a t" dir="rtl" style="right:2px;top:1px;font-size:13px;line-height:20px;font-family:'DejaVu Sans','Liberation Sans',sans-serif;color:#000;transform:scaleX(0.8654);transform-origin:right">عليرضا خاتمی</div></div>
<div class="c" style="left:582px;top:536px;width:124px;height:19px"><div class="a t" dir="rtl" style="right:2px;top:1px;font-size:13px;line-height:20px;font-family:'DejaVu Sans','Liberation Sans',sans-serif;color:#000;transform:scaleX(0.8428);transform-origin:right">شهر تهران</div></div>
<div class="a" style="left:810px;top:536px;width:1px;height:19px;background:#fff;"></div>
<div class="c" style="left:707px;top:536px;width:167px;height:19px"><div class="a t" style="left:3px;top:1px;font-size:13px;line-height:20px;font-family:'Liberation Sans','DejaVu Sans',sans-serif;color:#000;letter-spacing:-0.150px;">AKHATAMI@TUMS.AC.IR</div></div>
<div class="c" style="left:875px;top:536px;width:63px;height:19px"><div class="a t" dir="rtl" style="right:2px;top:1px;font-size:13px;line-height:20px;font-family:'DejaVu Sans','Liberation Sans',sans-serif;color:#000;transform:scaleX(0.8346);transform-origin:right">تهران</div></div>
<div class="c" style="left:939px;top:536px;width:63px;height:19px"><div class="a t" dir="rtl" style="right:2px;top:1px;font-size:13px;line-height:20px;font-family:'DejaVu Sans','Liberation Sans',sans-serif;color:#000;transform:scaleX(0.8346);transform-origin:right">تهران</div></div>
<div class="c" style="left:1003px;top:536px;width:93px;height:19px"><div class="a t" dir="rtl" style="right:2px;top:1px;font-size:13px;line-height:20px;font-family:'DejaVu Sans','Liberation Sans',sans-serif;color:#000;transform:scaleX(0.9249);transform-origin:right">پزشكان متخصص</div></div>
<div class="c" style="left:1097px;top:536px;width:63px;height:19px"><div class="a t" dir="rtl" style="right:2px;top:1px;font-size:13px;line-height:20px;font-family:'DejaVu Sans','Liberation Sans',sans-serif;color:#000;transform:scaleX(0.86);transform-origin:right">طب و پزشكي</div></div>
<div class="c" style="left:25px;top:556px;width:233px;height:19px"><div class="a t" dir="rtl" style="right:2px;top:1px;font-size:13px;line-height:20px;font-family:'DejaVu Sans','Liberation Sans',sans-serif;color:#000;transform:scaleX(0.9189);transform-origin:right">متخصص بيماريهاي پوست دكتر فرزانه خاکی</div></div>
<div class="c" style="left:259px;top:556px;width:95px;height:19px;color:#000;font-size:12.6px;line-height:20px"><span class="a" style="right:50px;top:1px">912</span><span class="a" style="right:2px;top:1px">769</span></div>
<div class="c" style="left:355px;top:556px;width:107px;height:19px;color:#000;font-size:12.6px;line-height:20px"><span class="a" style="right:50px;top:1px">912</span><span class="a" style="right:2px;top:1px">769</span></div>
<div class="c" style="left:463px;top:556px;width:118px;height:19px"><div class="a t" dir="rtl" style="right:2px;top:1px;font-size:13px;line-height:20px;font-family:'DejaVu Sans','Liberation Sans',sans-serif;color:#000;transform:scaleX(0.8056);transform-origin:right">فرزانه خاکی</div></div>
<div class="c" style="left:582px;top:556px;width:124px;height:19px"><div class="a t" dir="rtl" style="right:2px;top:1px;font-size:13px;line-height:20px;font-family:'DejaVu Sans','Liberation Sans',sans-serif;color:#000;transform:scaleX(0.8428);transform-origin:right">شهر تهران</div></div>
<div class="a" style="left:810px;top:556px;width:1px;height:19px;background:#fff;"></div>
<div class="c" style="left:707px;top:556px;width:167px;height:19px"><div class="a t" style="left:3px;top:1px;font-size:13px;line-height:20px;font-family:'Liberation Sans','DejaVu Sans',sans-serif;color:#000;letter-spacing:0.276px;">farzaneh_khaki@yahoo.com</div></div>
<div class="c" style="left:875px;top:556px;width:63px;height:19px"><div class="a t" dir="rtl" style="right:2px;top:1px;font-size:13px;line-height:20px;font-family:'DejaVu Sans','Liberation Sans',sans-serif;color:#000;transform:scaleX(0.8346);transform-origin:right">تهران</div></div>
<div class="c" style="left:939px;top:556px;width:63px;height:19px"><div class="a t" dir="rtl" style="right:2px;top:1px;font-size:13px;line-height:20px;font-family:'DejaVu Sans','Liberation Sans',sans-serif;color:#000;transform:scaleX(0.8346);transform-origin:right">تهران</div></div>
<div class="c" style="left:1003px;top:556px;width:93px;height:19px"><div class="a t" dir="rtl" style="right:2px;top:1px;font-size:13px;line-height:20px;font-family:'DejaVu Sans','Liberation Sans',sans-serif;color:#000;transform:scaleX(0.9249);transform-origin:right">پزشكان متخصص</div></div>
<div class="c" style="left:1097px;top:556px;width:63px;height:19px"><div class="a t" dir="rtl" style="right:2px;top:1px;font-size:13px;line-height:20px;font-family:'DejaVu Sans','Liberation Sans',sans-serif;color:#000;transform:scaleX(0.86);transform-origin:right">طب و پزشكي</div></div>
<div class="c" style="left:25px;top:576px;width:233px;height:19px"><div class="a t" dir="rtl" style="right:2px;top:1px;font-size:13px;line-height:20px;font-family:'DejaVu Sans','Liberation Sans',sans-serif;color:#000;transform:scaleX(0.919);transform-origin:right">متخصص بيماريهاي پوست دكتر مريم يوسفی</div></div>
<div class="c" style="left:259px;top:576px;width:95px;height:19px;color:#000;font-size:12.6px;line-height:20px"><span class="a" style="right:50px;top:1px">912</span><span class="a" style="right:2px;top:1px">507</span></div>
<div class="c" style="left:355px;top:576px;width:107px;height:19px;color:#000;font-size:12.6px;line-height:20px"><span class="a" style="right:50px;top:1px">912</span><span class="a" style="right:2px;top:1px">507</span></div>
<div class="c" style="left:463px;top:576px;width:118px;height:19px"><div class="a t" dir="rtl" style="right:2px;top:1px;font-size:13px;line-height:20px;font-family:'DejaVu Sans','Liberation Sans',sans-serif;color:#000;transform:scaleX(0.8094);transform-origin:right">مريم يوسفی</div></div>
<div class="c" style="left:582px;top:576px;width:124px;height:19px"><div class="a t" dir="rtl" style="right:2px;top:1px;font-size:13px;line-height:20px;font-family:'DejaVu Sans','Liberation Sans',sans-serif;color:#000;transform:scaleX(0.8428);transform-origin:right">شهر تهران</div></div>
<div class="a" style="left:810px;top:576px;width:1px;height:19px;background:#fff;"></div>
<div class="c" style="left:707px;top:576px;width:167px;height:19px"><div class="a t" style="left:3px;top:1px;font-size:13px;line-height:20px;font-family:'Liberation Sans','DejaVu Sans',sans-serif;color:#000;letter-spacing:-0.334px;">MARYAM_YOUSEFI@HOTMAIL.COM</div></div>
<div class="c" style="left:875px;top:576px;width:63px;height:19px"><div class="a t" dir="rtl" style="right:2px;top:1px;font-size:13px;line-height:20px;font-family:'DejaVu Sans','Liberation Sans',sans-serif;color:#000;transform:scaleX(0.8346);transform-origin:right">تهران</div></div>
<div class="c" style="left:939px;top:576px;width:63px;height:19px"><div class="a t" dir="rtl" style="right:2px;top:1px;font-size:13px;line-height:20px;font-family:'DejaVu Sans','Liberation Sans',sans-serif;color:#000;transform:scaleX(0.8346);transform-origin:right">تهران</div></div>
<div class="c" style="left:1003px;top:576px;width:93px;height:19px"><div class="a t" dir="rtl" style="right:2px;top:1px;font-size:13px;line-height:20px;font-family:'DejaVu Sans','Liberation Sans',sans-serif;color:#000;transform:scaleX(0.9249);transform-origin:right">پزشكان متخصص</div></div>
<div class="c" style="left:1097px;top:576px;width:63px;height:19px"><div class="a t" dir="rtl" style="right:2px;top:1px;font-size:13px;line-height:20px;font-family:'DejaVu Sans','Liberation Sans',sans-serif;color:#000;transform:scaleX(0.86);transform-origin:right">طب و پزشكي</div></div>
<div class="c" style="left:25px;top:596px;width:233px;height:19px"><div class="a t" dir="rtl" style="right:2px;top:1px;font-size:13px;line-height:20px;font-family:'DejaVu Sans','Liberation Sans',sans-serif;color:#000;transform:scaleX(0.939);transform-origin:right">متخصص بيماريهاي پوست دكتر بنفشه هاشمی</div></div>
<div class="c" style="left:259px;top:596px;width:95px;height:19px;color:#000;font-size:12.6px;line-height:20px"><span class="a" style="right:50px;top:1px">912</span><span class="a" style="right:2px;top:1px">839</span></div>
<div class="c" style="left:355px;top:596px;width:107px;height:19px;color:#000;font-size:12.6px;line-height:20px"><span class="a" style="right:50px;top:1px">912</span><span class="a" style="right:2px;top:1px">839</span></div>
<div class="c" style="left:463px;top:596px;width:118px;height:19px"><div class="a t" dir="rtl" style="right:2px;top:1px;font-size:13px;line-height:20px;font-family:'DejaVu Sans','Liberation Sans',sans-serif;color:#000;transform:scaleX(0.8844);transform-origin:right">بنفشه هاشمی</div></div>
<div class="c" style="left:582px;top:596px;width:124px;height:19px"><div class="a t" dir="rtl" style="right:2px;top:1px;font-size:13px;line-height:20px;font-family:'DejaVu Sans','Liberation Sans',sans-serif;color:#000;transform:scaleX(0.8746);transform-origin:right">شهر ابهر</div></div>
<div class="a" style="left:810px;top:596px;width:1px;height:19px;background:#fff;"></div>
<div class="c" style="left:707px;top:596px;width:167px;height:19px"><div class="a t" style="left:3px;top:1px;font-size:13px;line-height:20px;font-family:'Liberation Sans','DejaVu Sans',sans-serif;color:#000;letter-spacing:-0.375px;">DR-BANAFSHE-HASHEMI@YAHOO.COM</div></div>
<div class="c" style="left:875px;top:596px;width:63px;height:19px"><div class="a t" dir="rtl" style="right:2px;top:1px;font-size:13px;line-height:20px;font-family:'DejaVu Sans','Liberation Sans',sans-serif;color:#000;transform:scaleX(0.9042);transform-origin:right">زنجان</div></div>
<div class="c" style="left:939px;top:596px;width:63px;height:19px"><div class="a t" dir="rtl" style="right:2px;top:1px;font-size:13px;line-height:20px;font-family:'DejaVu Sans','Liberation Sans',sans-serif;color:#000;transform:scaleX(0.9311);transform-origin:right">ابهر</div></div>
<div class="c" style="left:1003px;top:596px;width:93px;height:19px"><div class="a t" dir="rtl" style="right:2px;top:1px;font-size:13px;line-height:20px;font-family:'DejaVu Sans','Liberation Sans',sans-serif;color:#000;transform:scaleX(0.9249);transform-origin:right">پزشكان متخصص</div></div>
<div class="c" style="left:1097px;top:596px;width:63px;height:19px"><div class="a t" dir="rtl" style="right:2px;top:1px;font-size:13px;line-height:20px;font-family:'DejaVu Sans','Liberation Sans',sans-serif;color:#000;transform:scaleX(0.86);transform-origin:right">طب و پزشكي</div></div>
<div class="c" style="left:25px;top:616px;width:233px;height:19px"><div class="a t" dir="rtl" style="right:2px;top:1px;font-size:13px;line-height:20px;font-family:'DejaVu Sans','Liberation Sans',sans-serif;color:#000;transform:scaleX(0.9326);transform-origin:right">متخصص بيماريهاي پوست دكتر فاطمه فتحعلی خاني</div></div>
<div class="c" style="left:259px;top:616px;width:95px;height:19px;color:#000;font-size:12.6px;line-height:20px"><span class="a" style="right:50px;top:1px">912</span><span class="a" style="right:2px;top:1px">256</span></div>
<div class="c" style="left:355px;top:616px;width:107px;height:19px;color:#000;font-size:12.6px;line-height:20px"><span class="a" style="right:50px;top:1px">912</span><span class="a" style="right:2px;top:1px">256</span></div>
<div class="c" style="left:463px;top:616px;width:118px;height:19px"><div class="a t" dir="rtl" style="right:2px;top:1px;font-size:13px;line-height:20px;font-family:'DejaVu Sans','Liberation Sans',sans-serif;color:#000;transform:scaleX(0.8845);transform-origin:right">فاطمه فتحعلی خاني</div></div>
<div class="c" style="left:582px;top:616px;width:124px;height:19px"><div class="a t" dir="rtl" style="right:2px;top:1px;font-size:13px;line-height:20px;font-family:'DejaVu Sans','Liberation Sans',sans-serif;color:#000;transform:scaleX(0.8428);transform-origin:right">شهر تهران</div></div>
<div class="c" style="left:707px;top:616px;width:231px;height:19px"><div class="a t" dir="rtl" style="right:2px;top:1px;font-size:13px;line-height:20px;font-family:'DejaVu Sans','Liberation Sans',sans-serif;color:#000;transform:scaleX(0.8346);transform-origin:right">تهران</div></div>
<div class="c" style="left:939px;top:616px;width:63px;height:19px"><div class="a t" dir="rtl" style="right:2px;top:1px;font-size:13px;line-height:20px;font-family:'DejaVu Sans','Liberation Sans',sans-serif;color:#000;transform:scaleX(0.8346);transform-origin:right">تهران</div></div>
<div class="c" style="left:1003px;top:616px;width:93px;height:19px"><div class="a t" dir="rtl" style="right:2px;top:1px;font-size:13px;line-height:20px;font-family:'DejaVu Sans','Liberation Sans',sans-serif;color:#000;transform:scaleX(0.9249);transform-origin:right">پزشكان متخصص</div></div>
<div class="c" style="left:1097px;top:616px;width:63px;height:19px"><div class="a t" dir="rtl" style="right:2px;top:1px;font-size:13px;line-height:20px;font-family:'DejaVu Sans','Liberation Sans',sans-serif;color:#000;transform:scaleX(0.86);transform-origin:right">طب و پزشكي</div></div>
<div class="c" style="left:25px;top:636px;width:233px;height:19px"><div class="a t" dir="rtl" style="right:2px;top:1px;font-size:13px;line-height:20px;font-family:'DejaVu Sans','Liberation Sans',sans-serif;color:#000;transform:scaleX(0.9199);transform-origin:right">متخصص بيماريهاي پوست دكتر آريان فرج الهی</div></div>
<div class="c" style="left:259px;top:636px;width:95px;height:19px;color:#000;font-size:12.6px;line-height:20px"><span class="a" style="right:50px;top:1px">912</span><span class="a" style="right:2px;top:1px">196</span></div>
<div class="c" style="left:355px;top:636px;width:107px;height:19px;color:#000;font-size:12.6px;line-height:20px"><span class="a" style="right:50px;top:1px">912</span><span class="a" style="right:2px;top:1px">196</span></div>
<div class="c" style="left:463px;top:636px;width:118px;height:19px"><div class="a t" dir="rtl" style="right:2px;top:1px;font-size:13px;line-height:20px;font-family:'DejaVu Sans','Liberation Sans',sans-serif;color:#000;transform:scaleX(0.8285);transform-origin:right">آريان فرج الهی</div></div>
<div class="c" style="left:582px;top:636px;width:124px;height:19px"><div class="a t" dir="rtl" style="right:2px;top:1px;font-size:13px;line-height:20px;font-family:'DejaVu Sans','Liberation Sans',sans-serif;color:#000;transform:scaleX(0.8428);transform-origin:right">شهر تهران</div></div>
<div class="a" style="left:810px;top:636px;width:1px;height:19px;background:#fff;"></div>
<div class="c" style="left:707px;top:636px;width:167px;height:19px"><div class="a t" style="left:3px;top:1px;font-size:13px;line-height:20px;font-family:'Liberation Sans','DejaVu Sans',sans-serif;color:#000;letter-spacing:-0.199px;">ARYAN-F@HOTMAIL.COM</div></div>
<div class="c" style="left:875px;top:636px;width:63px;height:19px"><div class="a t" dir="rtl" style="right:2px;top:1px;font-size:13px;line-height:20px;font-family:'DejaVu Sans','Liberation Sans',sans-serif;color:#000;transform:scaleX(0.8346);transform-origin:right">تهران</div></div>
<div class="c" style="left:939px;top:636px;width:63px;height:19px"><div class="a t" dir="rtl" style="right:2px;top:1px;font-size:13px;line-height:20px;font-family:'DejaVu Sans','Liberation Sans',sans-serif;color:#000;transform:scaleX(0.8346);transform-origin:right">تهران</div></div>
<div class="c" style="left:1003px;top:636px;width:93px;height:19px"><div class="a t" dir="rtl" style="right:2px;top:1px;font-size:13px;line-height:20px;font-family:'DejaVu Sans','Liberation Sans',sans-serif;color:#000;transform:scaleX(0.9249);transform-origin:right">پزشكان متخصص</div></div>
<div class="c" style="left:1097px;top:636px;width:63px;height:19px"><div class="a t" dir="rtl" style="right:2px;top:1px;font-size:13px;line-height:20px;font-family:'DejaVu Sans','Liberation Sans',sans-serif;color:#000;transform:scaleX(0.86);transform-origin:right">طب و پزشكي</div></div>
<div class="c" style="left:25px;top:656px;width:233px;height:19px"><div class="a t" dir="rtl" style="right:2px;top:1px;font-size:13px;line-height:20px;font-family:'DejaVu Sans','Liberation Sans',sans-serif;color:#000;transform:scaleX(0.93);transform-origin:right">متخصص بيماريهاي پوست دكتر محمد رضا كياني خلخالي</div></div>
<div class="c" style="left:259px;top:656px;width:95px;height:19px;color:#000;font-size:12.6px;line-height:20px"><span class="a" style="right:50px;top:1px">912</span><span class="a" style="right:2px;top:1px">880</span></div>
<div class="c" style="left:355px;top:656px;width:107px;height:19px;color:#000;font-size:12.6px;line-height:20px"><span class="a" style="right:50px;top:1px">912</span><span class="a" style="right:2px;top:1px">880</span></div>
<div class="c" style="left:463px;top:656px;width:118px;height:19px"><div class="a t" dir="rtl" style="right:2px;top:1px;font-size:13px;line-height:20px;font-family:'DejaVu Sans','Liberation Sans',sans-serif;color:#000;transform:scaleX(0.93);transform-origin:right">محمد رضا كياني خلخالي</div></div>
<div class="c" style="left:582px;top:656px;width:124px;height:19px"><div class="a t" dir="rtl" style="right:2px;top:1px;font-size:13px;line-height:20px;font-family:'DejaVu Sans','Liberation Sans',sans-serif;color:#000;transform:scaleX(0.9284);transform-origin:right">شهر چابهار</div></div>
<div class="a" style="left:874px;top:656px;width:1px;height:19px;background:#fff;"></div>
<div class="c" style="left:707px;top:656px;width:231px;height:19px"><div class="a t" dir="rtl" style="right:2px;top:1px;font-size:13px;line-height:20px;font-family:'DejaVu Sans','Liberation Sans',sans-serif;color:#000;transform:scaleX(0.8992);transform-origin:right">سيستان و بلوچستان</div></div>
<div class="c" style="left:939px;top:656px;width:63px;height:19px"><div class="a t" dir="rtl" style="right:2px;top:1px;font-size:13px;line-height:20px;font-family:'DejaVu Sans','Liberation Sans',sans-serif;color:#000;transform:scaleX(1.0201);transform-origin:right">چابهار</div></div>
<div class="c" style="left:1003px;top:656px;width:93px;height:19px"><div class="a t" dir="rtl" style="right:2px;top:1px;font-size:13px;line-height:20px;font-family:'DejaVu Sans','Liberation Sans',sans-serif;color:#000;transform:scaleX(0.9249);transform-origin:right">پزشكان متخصص</div></div>
<div class="c" style="left:1097px;top:656px;width:63px;height:19px"><div class="a t" dir="rtl" style="right:2px;top:1px;font-size:13px;line-height:20px;font-family:'DejaVu Sans','Liberation Sans',sans-serif;color:#000;transform:scaleX(0.86);transform-origin:right">طب و پزشكي</div></div>
<div class="c" style="left:25px;top:676px;width:233px;height:19px"><div class="a t" dir="rtl" style="right:2px;top:1px;font-size:13px;line-height:20px;font-family:'DejaVu Sans','Liberation Sans',sans-serif;color:#000;transform:scaleX(0.9602);transform-origin:right">متخصص بيماريهاي پوست دكتر نيما حجازي</div></div>
<div class="c" style="left:259px;top:676px;width:95px;height:19px;color:#000;font-size:12.6px;line-height:20px"><span class="a" style="right:50px;top:1px">912</span><span class="a" style="right:2px;top:1px">341</span></div>
<div class="c" style="left:355px;top:676px;width:107px;height:19px;color:#000;font-size:12.6px;line-height:20px"><span class="a" style="right:50px;top:1px">912</span><span class="a" style="right:2px;top:1px">341</span></div>
<div class="c" style="left:463px;top:676px;width:118px;height:19px"><div class="a t" dir="rtl" style="right:2px;top:1px;font-size:13px;line-height:20px;font-family:'DejaVu Sans','Liberation Sans',sans-serif;color:#000;transform:scaleX(0.95);transform-origin:right">نيما حجازي</div></div>
<div class="c" style="left:582px;top:676px;width:124px;height:19px"><div class="a t" dir="rtl" style="right:2px;top:1px;font-size:13px;line-height:20px;font-family:'DejaVu Sans','Liberation Sans',sans-serif;color:#000;transform:scaleX(0.8691);transform-origin:right">شهر چالوس</div></div>
<div class="a" style="left:810px;top:676px;width:1px;height:19px;background:#fff;"></div>
<div class="c" style="left:707px;top:676px;width:167px;height:19px"><div class="a t" style="left:3px;top:1px;font-size:13px;line-height:20px;font-family:'Liberation Sans','DejaVu Sans',sans-serif;color:#000;letter-spacing:0.409px;">N-hej@yahoo.com</div></div>
<div class="c" style="left:875px;top:676px;width:63px;height:19px"><div class="a t" dir="rtl" style="right:2px;top:1px;font-size:13px;line-height:20px;font-family:'DejaVu Sans','Liberation Sans',sans-serif;color:#000;transform:scaleX(0.8175);transform-origin:right">مازندران</div></div>
<div class="c" style="left:939px;top:676px;width:63px;height:19px"><div class="a t" dir="rtl" style="right:2px;top:1px;font-size:13px;line-height:20px;font-family:'DejaVu Sans','Liberation Sans',sans-serif;color:#000;transform:scaleX(0.882);transform-origin:right">چالوس</div></div>
<div class="c" style="left:1003px;top:676px;width:93px;height:19px"><div class="a t" dir="rtl" style="right:2px;top:1px;font-size:13px;line-height:20px;font-family:'DejaVu Sans','Liberation Sans',sans-serif;color:#000;transform:scaleX(0.9249);transform-origin:right">پزشكان متخصص</div></div>
<div class="c" style="left:1097px;top:676px;width:63px;height:19px"><div class="a t" dir="rtl" style="right:2px;top:1px;font-size:13px;line-height:20px;font-family:'DejaVu Sans','Liberation Sans',sans-serif;color:#000;transform:scaleX(0.86);transform-origin:right">طب و پزشكي</div></div>
<div class="c" style="left:25px;top:696px;width:233px;height:19px"><div class="a t" dir="rtl" style="right:2px;top:1px;font-size:13px;line-height:20px;font-family:'DejaVu Sans','Liberation Sans',sans-serif;color:#000;transform:scaleX(0.9359);transform-origin:right">متخصص بيماريهاي پوست دكتر علی صيادي نژاد</div></div>
<div class="c" style="left:259px;top:696px;width:95px;height:19px;color:#000;font-size:12.6px;line-height:20px"><span class="a" style="right:50px;top:1px">911</span><span class="a" style="right:2px;top:1px">739</span></div>
<div class="c" style="left:355px;top:696px;width:107px;height:19px;color:#000;font-size:12.6px;line-height:20px"><span class="a" style="right:50px;top:1px">911</span><span class="a" style="right:2px;top:1px">739</span></div>
<div class="c" style="left:463px;top:696px;width:118px;height:19px"><div class="a t" dir="rtl" style="right:2px;top:1px;font-size:13px;line-height:20px;font-family:'DejaVu Sans','Liberation Sans',sans-serif;color:#000;transform:scaleX(0.8812);transform-origin:right">علی صيادي نژاد</div></div>
<div class="c" style="left:582px;top:696px;width:124px;height:19px"><div class="a t" dir="rtl" style="right:2px;top:1px;font-size:13px;line-height:20px;font-family:'DejaVu Sans','Liberation Sans',sans-serif;color:#000;transform:scaleX(0.8387);transform-origin:right">شهر نوشهر</div></div>
<div class="c" style="left:707px;top:696px;width:231px;height:19px"><div class="a t" dir="rtl" style="right:2px;top:1px;font-size:13px;line-height:20px;font-family:'DejaVu Sans','Liberation Sans',sans-serif;color:#000;transform:scaleX(0.8175);transform-origin:right">مازندران</div></div>
<div class="c" style="left:939px;top:696px;width:63px;height:19px"><div class="a t" dir="rtl" style="right:2px;top:1px;font-size:13px;line-height:20px;font-family:'DejaVu Sans','Liberation Sans',sans-serif;color:#000;transform:scaleX(0.8865);transform-origin:right">نوشهر</div></div>
<div class="c" style="left:1003px;top:696px;width:93px;height:19px"><div class="a t" dir="rtl" style="right:2px;top:1px;font-size:13px;line-height:20px;font-family:'DejaVu Sans','Liberation Sans',sans-serif;color:#000;transform:scaleX(0.9249);transform-origin:right">پزشكان متخصص</div></div>
<div class="c" style="left:1097px;top:696px;width:63px;height:19px"><div class="a t" dir="rtl" style="right:2px;top:1px;font-size:13px;line-height:20px;font-family:'DejaVu Sans','Liberation Sans',sans-serif;color:#000;transform:scaleX(0.86);transform-origin:right">طب و پزشكي</div></div>
<div class="c" style="left:25px;top:716px;width:233px;height:19px"><div class="a t" dir="rtl" style="right:2px;top:1px;font-size:13px;line-height:20px;font-family:'DejaVu Sans','Liberation Sans',sans-serif;color:#000;transform:scaleX(0.9531);transform-origin:right">متخصص بيماريهاي پوست دكتر سهيل فاتح</div></div>
<div class="c" style="left:259px;top:716px;width:95px;height:19px;color:#000;font-size:12.6px;line-height:20px"><span class="a" style="right:50px;top:1px">912</span><span class="a" style="right:2px;top:1px">725</span></div>
<div class="c" style="left:355px;top:716px;width:107px;height:19px;color:#000;font-size:12.6px;line-height:20px"><span class="a" style="right:50px;top:1px">912</span><span class="a" style="right:2px;top:1px">725</span></div>
<div class="c" style="left:463px;top:716px;width:118px;height:19px"><div class="a t" dir="rtl" style="right:2px;top:1px;font-size:13px;line-height:20px;font-family:'DejaVu Sans','Liberation Sans',sans-serif;color:#000;transform:scaleX(0.9213);transform-origin:right">سهيل فاتح</div></div>
<div class="c" style="left:582px;top:716px;width:124px;height:19px"><div class="a t" dir="rtl" style="right:2px;top:1px;font-size:13px;line-height:20px;font-family:'DejaVu Sans','Liberation Sans',sans-serif;color:#000;transform:scaleX(0.9062);transform-origin:right">شهر نهاوند</div></div>
<div class="c" style="left:707px;top:716px;width:231px;height:19px"><div class="a t" dir="rtl" style="right:2px;top:1px;font-size:13px;line-height:20px;font-family:'DejaVu Sans','Liberation Sans',sans-serif;color:#000;transform:scaleX(0.9241);transform-origin:right">همدان</div></div>
<div class="c" style="left:939px;top:716px;width:63px;height:19px"><div class="a t" dir="rtl" style="right:2px;top:1px;font-size:13px;line-height:20px;font-family:'DejaVu Sans','Liberation Sans',sans-serif;color:#000;transform:scaleX(1.0067);transform-origin:right">نهاوند</div></div>
<div class="c" style="left:1003px;top:716px;width:93px;height:19px"><div class="a t" dir="rtl" style="right:2px;top:1px;font-size:13px;line-height:20px;font-family:'DejaVu Sans','Liberation Sans',sans-serif;color:#000;transform:scaleX(0.9249);transform-origin:right">پزشكان متخصص</div></div>
<div class="c" style="left:1097px;top:716px;width:63px;height:19px"><div class="a t" dir="rtl" style="right:2px;top:1px;font-size:13px;line-height:20px;font-family:'DejaVu Sans','Liberation Sans',sans-serif;color:#000;transform:scaleX(0.86);transform-origin:right">طب و پزشكي</div></div>
<div class="c" style="left:25px;top:736px;width:233px;height:19px"><div class="a t" dir="rtl" style="right:2px;top:1px;font-size:13px;line-height:20px;font-family:'DejaVu Sans','Liberation Sans',sans-serif;color:#000;transform:scaleX(0.925);transform-origin:right">متخصص بيماريهاي پوست دكتر رضا امينی</div></div>
<div class="c" style="left:259px;top:736px;width:95px;height:19px;color:#000;font-size:12.6px;line-height:20px"><span class="a" style="right:50px;top:1px">915</span><span class="a" style="right:2px;top:1px">164</span></div>
<div class="c" style="left:355px;top:736px;width:107px;height:19px;color:#000;font-size:12.6px;line-height:20px"><span class="a" style="right:50px;top:1px">915</span><span class="a" style="right:2px;top:1px">164</span></div>
<div class="c" style="left:463px;top:736px;width:118px;height:19px"><div class="a t" dir="rtl" style="right:2px;top:1px;font-size:13px;line-height:20px;font-family:'DejaVu Sans','Liberation Sans',sans-serif;color:#000;transform:scaleX(0.8048);transform-origin:right">رضا امينی</div></div>
<div class="c" style="left:582px;top:736px;width:124px;height:19px"><div class="a t" dir="rtl" style="right:2px;top:1px;font-size:13px;line-height:20px;font-family:'DejaVu Sans','Liberation Sans',sans-serif;color:#000;transform:scaleX(0.8946);transform-origin:right">شهر نيشابور</div></div>
<div class="a" style="left:874px;top:736px;width:1px;height:19px;background:#fff;"></div>
<div class="c" style="left:707px;top:736px;width:231px;height:19px"><div class="a t" dir="rtl" style="right:2px;top:1px;font-size:13px;line-height:20px;font-family:'DejaVu Sans','Liberation Sans',sans-serif;color:#000;transform:scaleX(0.8582);transform-origin:right">خراسان رضوی</div></div>
<div class="c" style="left:939px;top:736px;width:63px;height:19px"><div class="a t" dir="rtl" style="right:2px;top:1px;font-size:13px;line-height:20px;font-family:'DejaVu Sans','Liberation Sans',sans-serif;color:#000;transform:scaleX(0.9441);transform-origin:right">نيشابور</div></div>
<div class="c" style="left:1003px;top:736px;width:93px;height:19px"><div class="a t" dir="rtl" style="right:2px;top:1px;font-size:13px;line-height:20px;font-family:'DejaVu Sans','Liberation Sans',sans-serif;color:#000;transform:scaleX(0.9249);transform-origin:right">پزشكان متخصص</div></div>
<div class="c" style="left:1097px;top:736px;width:63px;height:19px"><div class="a t" dir="rtl" style="right:2px;top:1px;font-size:13px;line-height:20px;font-family:'DejaVu Sans','Liberation Sans',sans-serif;color:#000;transform:scaleX(0.86);transform-origin:right">طب و پزشكي</div></div>
<div class="c" style="left:25px;top:756px;width:233px;height:19px"><div class="a t" dir="rtl" style="right:2px;top:1px;font-size:13px;line-height:20px;font-family:'DejaVu Sans','Liberation Sans',sans-serif;color:#000;transform:scaleX(0.93);transform-origin:right">متخصص بيماريهاي پوست دكتر پريسا امامقلی تبارملكشاه</div></div>
<div class="c" style="left:259px;top:756px;width:95px;height:19px;color:#000;font-size:12.6px;line-height:20px"><span class="a" style="right:50px;top:1px">912</span><span class="a" style="right:2px;top:1px">402</span></div>
<div class="c" style="left:355px;top:756px;width:107px;height:19px;color:#000;font-size:12.6px;line-height:20px"><span class="a" style="right:50px;top:1px">912</span><span class="a" style="right:2px;top:1px">402</span></div>
<div class="c" style="left:463px;top:756px;width:118px;height:19px"><div class="a t" dir="rtl" style="right:2px;top:1px;font-size:13px;line-height:20px;font-family:'DejaVu Sans','Liberation Sans',sans-serif;color:#000;transform:scaleX(0.93);transform-origin:right">پريسا امامقلی تبارملكشاه</div></div>
<div class="c" style="left:582px;top:756px;width:124px;height:19px"><div class="a t" dir="rtl" style="right:2px;top:1px;font-size:13px;line-height:20px;font-family:'DejaVu Sans','Liberation Sans',sans-serif;color:#000;transform:scaleX(0.874);transform-origin:right">شهر آمل</div></div>
<div class="c" style="left:707px;top:756px;width:231px;height:19px"><div class="a t" dir="rtl" style="right:2px;top:1px;font-size:13px;line-height:20px;font-family:'DejaVu Sans','Liberation Sans',sans-serif;color:#000;transform:scaleX(0.8175);transform-origin:right">مازندران</div></div>
<div class="c" style="left:939px;top:756px;width:63px;height:19px"><div class="a t" dir="rtl" style="right:2px;top:1px;font-size:13px;line-height:20px;font-family:'DejaVu Sans','Liberation Sans',sans-serif;color:#000;transform:scaleX(0.9304);transform-origin:right">آمل</div></div>
<div class="c" style="left:1003px;top:756px;width:93px;height:19px"><div class="a t" dir="rtl" style="right:2px;top:1px;font-size:13px;line-height:20px;font-family:'DejaVu Sans','Liberation Sans',sans-serif;color:#000;transform:scaleX(0.9249);transform-origin:right">پزشكان متخصص</div></div>
<div class="c" style="left:1097px;top:756px;width:63px;height:19px"><div class="a t" dir="rtl" style="right:2px;top:1px;font-size:13px;line-height:20px;font-family:'DejaVu Sans','Liberation Sans',sans-serif;color:#000;transform:scaleX(0.86);transform-origin:right">طب و پزشكي</div></div>
<div class="c" style="left:25px;top:776px;width:233px;height:19px"><div class="a t" dir="rtl" style="right:2px;top:1px;font-size:13px;line-height:20px;font-family:'DejaVu Sans','Liberation Sans',sans-serif;color:#000;transform:scaleX(0.9491);transform-origin:right">متخصص بيماريهاي پوست دكتر قادر خدايارپور</div></div>
<div class="c" style="left:259px;top:776px;width:95px;height:19px;color:#000;font-size:12.6px;line-height:20px"><span class="a" style="right:50px;top:1px">912</span><span class="a" style="right:2px;top:1px">319</span></div>
<div class="c" style="left:355px;top:776px;width:107px;height:19px;color:#000;font-size:12.6px;line-height:20px"><span class="a" style="right:50px;top:1px">912</span><span class="a" style="right:2px;top:1px">319</span></div>
<div class="c" style="left:463px;top:776px;width:118px;height:19px"><div class="a t" dir="rtl" style="right:2px;top:1px;font-size:13px;line-height:20px;font-family:'DejaVu Sans','Liberation Sans',sans-serif;color:#000;transform:scaleX(0.916);transform-origin:right">قادر خدايارپور</div></div>
<div class="c" style="left:582px;top:776px;width:124px;height:19px"><div class="a t" dir="rtl" style="right:2px;top:1px;font-size:13px;line-height:20px;font-family:'DejaVu Sans','Liberation Sans',sans-serif;color:#000;transform:scaleX(0.8428);transform-origin:right">شهر تهران</div></div>
<div class="c" style="left:707px;top:776px;width:231px;height:19px"><div class="a t" dir="rtl" style="right:2px;top:1px;font-size:13px;line-height:20px;font-family:'DejaVu Sans','Liberation Sans',sans-serif;color:#000;transform:scaleX(0.8346);transform-origin:right">تهران</div></div>
<div class="c" style="left:939px;top:776px;width:63px;height:19px"><div class="a t" dir="rtl" style="right:2px;top:1px;font-size:13px;line-height:20px;font-family:'DejaVu Sans','Liberation Sans',sans-serif;color:#000;transform:scaleX(0.8346);transform-origin:right">تهران</div></div>
<div class="c" style="left:1003px;top:776px;width:93px;height:19px"><div class="a t" dir="rtl" style="right:2px;top:1px;font-size:13px;line-height:20px;font-family:'DejaVu Sans','Liberation Sans',sans-serif;color:#000;transform:scaleX(0.9249);transform-origin:right">پزشكان متخصص</div></div>
<div class="c" style="left:1097px;top:776px;width:63px;height:19px"><div class="a t" dir="rtl" style="right:2px;top:1px;font-size:13px;line-height:20px;font-family:'DejaVu Sans','Liberation Sans',sans-serif;color:#000;transform:scaleX(0.86);transform-origin:right">طب و پزشكي</div></div>
<div class="c" style="left:25px;top:796px;width:233px;height:19px"><div class="a t" dir="rtl" style="right:2px;top:1px;font-size:13px;line-height:20px;font-family:'DejaVu Sans','Liberation Sans',sans-serif;color:#000;transform:scaleX(0.941);transform-origin:right">متخصص بيماريهاي پوست دكتر ماندانا خسروآرا</div></div>
<div class="c" style="left:259px;top:796px;width:95px;height:19px;color:#000;font-size:12.6px;line-height:20px"><span class="a" style="right:50px;top:1px">912</span><span class="a" style="right:2px;top:1px">213</span></div>
<div class="c" style="left:355px;top:796px;width:107px;height:19px;color:#000;font-size:12.6px;line-height:20px"><span class="a" style="right:50px;top:1px">912</span><span class="a" style="right:2px;top:1px">213</span></div>
<div class="c" style="left:463px;top:796px;width:118px;height:19px"><div class="a t" dir="rtl" style="right:2px;top:1px;font-size:13px;line-height:20px;font-family:'DejaVu Sans','Liberation Sans',sans-serif;color:#000;transform:scaleX(0.8946);transform-origin:right">ماندانا خسروآرا</div></div>
<div class="c" style="left:582px;top:796px;width:124px;height:19px"><div class="a t" dir="rtl" style="right:2px;top:1px;font-size:13px;line-height:20px;font-family:'DejaVu Sans','Liberation Sans',sans-serif;color:#000;transform:scaleX(0.8428);transform-origin:right">شهر تهران</div></div>
<div class="a" style="left:810px;top:796px;width:1px;height:19px;background:#fff;"></div>
<div class="c" style="left:707px;top:796px;width:167px;height:19px"><div class="a t" style="left:3px;top:1px;font-size:13px;line-height:20px;font-family:'Liberation Sans','DejaVu Sans',sans-serif;color:#000;letter-spacing:-0.416px;">KHOSROARA@YAHOO.COM</div></div>
<div class="c" style="left:875px;top:796px;width:63px;height:19px"><div class="a t" dir="rtl" style="right:2px;top:1px;font-size:13px;line-height:20px;font-family:'DejaVu Sans','Liberation Sans',sans-serif;color:#000;transform:scaleX(0.8346);transform-origin:right">تهران</div></div>
<div class="c" style="left:939px;top:796px;width:63px;height:19px"><div class="a t" dir="rtl" style="right:2px;top:1px;font-size:13px;line-height:20px;font-family:'DejaVu Sans','Liberation Sans',sans-serif;color:#000;transform:scaleX(0.8346);transform-origin:right">تهران</div></div>
<div class="c" style="left:1003px;top:796px;width:93px;height:19px"><div class="a t" dir="rtl" style="right:2px;top:1px;font-size:13px;line-height:20px;font-family:'DejaVu Sans','Liberation Sans',sans-serif;color:#000;transform:scaleX(0.9249);transform-origin:right">پزشكان متخصص</div></div>
<div class="c" style="left:1097px;top:796px;width:63px;height:19px"><div class="a t" dir="rtl" style="right:2px;top:1px;font-size:13px;line-height:20px;font-family:'DejaVu Sans','Liberation Sans',sans-serif;color:#000;transform:scaleX(0.86);transform-origin:right">طب و پزشكي</div></div>
<div class="c" style="left:25px;top:816px;width:233px;height:19px"><div class="a t" dir="rtl" style="right:2px;top:1px;font-size:13px;line-height:20px;font-family:'DejaVu Sans','Liberation Sans',sans-serif;color:#000;transform:scaleX(0.9323);transform-origin:right">متخصص بيماريهاي پوست دكتر ولي اله خسروجردي</div></div>
<div class="c" style="left:259px;top:816px;width:95px;height:19px;color:#000;font-size:12.6px;line-height:20px"><span class="a" style="right:50px;top:1px">912</span><span class="a" style="right:2px;top:1px">430</span></div>
<div class="c" style="left:355px;top:816px;width:107px;height:19px;color:#000;font-size:12.6px;line-height:20px"><span class="a" style="right:50px;top:1px">912</span><span class="a" style="right:2px;top:1px">430</span></div>
<div class="c" style="left:463px;top:816px;width:118px;height:19px"><div class="a t" dir="rtl" style="right:2px;top:1px;font-size:13px;line-height:20px;font-family:'DejaVu Sans','Liberation Sans',sans-serif;color:#000;transform:scaleX(0.8831);transform-origin:right">ولي اله خسروجردي</div></div>
<div class="c" style="left:582px;top:816px;width:124px;height:19px"><div class="a t" dir="rtl" style="right:2px;top:1px;font-size:13px;line-height:20px;font-family:'DejaVu Sans','Liberation Sans',sans-serif;color:#000;transform:scaleX(0.8428);transform-origin:right">شهر تهران</div></div>
<div class="c" style="left:707px;top:816px;width:231px;height:19px"><div class="a t" dir="rtl" style="right:2px;top:1px;font-size:13px;line-height:20px;font-family:'DejaVu Sans','Liberation Sans',sans-serif;color:#000;transform:scaleX(0.8346);transform-origin:right">تهران</div></div>
<div class="c" style="left:939px;top:816px;width:63px;height:19px"><div class="a t" dir="rtl" style="right:2px;top:1px;font-size:13px;line-height:20px;font-family:'DejaVu Sans','Liberation Sans',sans-serif;color:#000;transform:scaleX(0.8346);transform-origin:right">تهران</div></div>
<div class="c" style="left:1003px;top:816px;width:93px;height:19px"><div class="a t" dir="rtl" style="right:2px;top:1px;font-size:13px;line-height:20px;font-family:'DejaVu Sans','Liberation Sans',sans-serif;color:#000;transform:scaleX(0.9249);transform-origin:right">پزشكان متخصص</div></div>
<div class="c" style="left:1097px;top:816px;width:63px;height:19px"><div class="a t" dir="rtl" style="right:2px;top:1px;font-size:13px;line-height:20px;font-family:'DejaVu Sans','Liberation Sans',sans-serif;color:#000;transform:scaleX(0.86);transform-origin:right">طب و پزشكي</div></div>
<div class="c" style="left:25px;top:836px;width:233px;height:19px"><div class="a t" dir="rtl" style="right:2px;top:1px;font-size:13px;line-height:20px;font-family:'DejaVu Sans','Liberation Sans',sans-serif;color:#000;transform:scaleX(0.9339);transform-origin:right">متخصص بيماريهاي پوست دكتر افشين داروغه دفتر</div></div>
<div class="c" style="left:259px;top:836px;width:95px;height:19px;color:#000;font-size:12.6px;line-height:20px"><span class="a" style="right:50px;top:1px">913</span><span class="a" style="right:2px;top:1px">762</span></div>
<div class="c" style="left:355px;top:836px;width:107px;height:19px;color:#000;font-size:12.6px;line-height:20px"><span class="a" style="right:50px;top:1px">913</span><span class="a" style="right:2px;top:1px">762</span></div>
<div class="c" style="left:463px;top:836px;width:118px;height:19px"><div class="a t" dir="rtl" style="right:2px;top:1px;font-size:13px;line-height:20px;font-family:'DejaVu Sans','Liberation Sans',sans-serif;color:#000;transform:scaleX(0.8843);transform-origin:right">افشين داروغه دفتر</div></div>
<div class="c" style="left:582px;top:836px;width:124px;height:19px"><div class="a t" dir="rtl" style="right:2px;top:1px;font-size:13px;line-height:20px;font-family:'DejaVu Sans','Liberation Sans',sans-serif;color:#000;transform:scaleX(0.8844);transform-origin:right">شهر شاهين شهر</div></div>
<div class="c" style="left:707px;top:836px;width:231px;height:19px"><div class="a t" dir="rtl" style="right:2px;top:1px;font-size:13px;line-height:20px;font-family:'DejaVu Sans','Liberation Sans',sans-serif;color:#000;transform:scaleX(0.9034);transform-origin:right">اصفهان</div></div>
<div class="c" style="left:939px;top:836px;width:63px;height:19px"><div class="a t" dir="rtl" style="right:2px;top:1px;font-size:13px;line-height:20px;font-family:'DejaVu Sans','Liberation Sans',sans-serif;color:#000;transform:scaleX(0.8694);transform-origin:right">شا هين شهر</div></div>
<div class="c" style="left:1003px;top:836px;width:93px;height:19px"><div class="a t" dir="rtl" style="right:2px;top:1px;font-size:13px;line-height:20px;font-family:'DejaVu Sans','Liberation Sans',sans-serif;color:#000;transform:scaleX(0.9249);transform-origin:right">پزشكان متخصص</div></div>
<div class="c" style="left:1097px;top:836px;width:63px;height:19px"><div class="a t" dir="rtl" style="right:2px;top:1px;font-size:13px;line-height:20px;font-family:'DejaVu Sans','Liberation Sans',sans-serif;color:#000;transform:scaleX(0.86);transform-origin:right">طب و پزشكي</div></div>
<div class="c" style="left:25px;top:856px;width:233px;height:19px"><div class="a t" dir="rtl" style="right:2px;top:1px;font-size:13px;line-height:20px;font-family:'DejaVu Sans','Liberation Sans',sans-serif;color:#000;transform:scaleX(0.9702);transform-origin:right">متخصص بيماريهاي پوست دكتر حميد حميدي</div></div>
<div class="c" style="left:259px;top:856px;width:95px;height:19px;color:#000;font-size:12.6px;line-height:20px"><span class="a" style="right:50px;top:1px">918</span><span class="a" style="right:2px;top:1px">123</span></div>
<div class="c" style="left:355px;top:856px;width:107px;height:19px;color:#000;font-size:12.6px;line-height:20px"><span class="a" style="right:50px;top:1px">918</span><span class="a" style="right:2px;top:1px">123</span></div>
<div class="c" style="left:463px;top:856px;width:118px;height:19px"><div class="a t" dir="rtl" style="right:2px;top:1px;font-size:13px;line-height:20px;font-family:'DejaVu Sans','Liberation Sans',sans-serif;color:#000;transform:scaleX(0.9865);transform-origin:right">حميد حميدي</div></div>
<div class="c" style="left:582px;top:856px;width:124px;height:19px"><div class="a t" dir="rtl" style="right:2px;top:1px;font-size:13px;line-height:20px;font-family:'DejaVu Sans','Liberation Sans',sans-serif;color:#000;transform:scaleX(0.8345);transform-origin:right">شهر اراک</div></div>
<div class="c" style="left:707px;top:856px;width:231px;height:19px"><div class="a t" dir="rtl" style="right:2px;top:1px;font-size:13px;line-height:20px;font-family:'DejaVu Sans','Liberation Sans',sans-serif;color:#000;transform:scaleX(0.7881);transform-origin:right">مرکزی</div></div>
<div class="c" style="left:939px;top:856px;width:63px;height:19px"><div class="a t" dir="rtl" style="right:2px;top:1px;font-size:13px;line-height:20px;font-family:'DejaVu Sans','Liberation Sans',sans-serif;color:#000;transform:scaleX(0.7756);transform-origin:right">اراک</div></div>
<div class="c" style="left:1003px;top:856px;width:93px;height:19px"><div class="a t" dir="rtl" style="right:2px;top:1px;font-size:13px;line-height:20px;font-family:'DejaVu Sans','Liberation Sans',sans-serif;color:#000;transform:scaleX(0.9249);transform-origin:right">پزشكان متخصص</div></div>
<div class="c" style="left:1097px;top:856px;width:63px;height:19px"><div class="a t" dir="rtl" style="right:2px;top:1px;font-size:13px;line-height:20px;font-family:'DejaVu Sans','Liberation Sans',sans-serif;color:#000;transform:scaleX(0.86);transform-origin:right">طب و پزشكي</div></div>
<div class="c" style="left:25px;top:876px;width:233px;height:19px"><div class="a t" dir="rtl" style="right:2px;top:1px;font-size:13px;line-height:20px;font-family:'DejaVu Sans','Liberation Sans',sans-serif;color:#000;transform:scaleX(0.9575);transform-origin:right">متخصص بيماريهاي پوست دكتر محمود سينا</div></div>
<div class="c" style="left:259px;top:876px;width:95px;height:19px;color:#000;font-size:12.6px;line-height:20px"><span class="a" style="right:50px;top:1px">935</span><span class="a" style="right:2px;top:1px">647</span></div>
<div class="c" style="left:355px;top:876px;width:107px;height:19px;color:#000;font-size:12.6px;line-height:20px"><span class="a" style="right:50px;top:1px">935</span><span class="a" style="right:2px;top:1px">647</span></div>
<div class="c" style="left:463px;top:876px;width:118px;height:19px"><div class="a t" dir="rtl" style="right:2px;top:1px;font-size:13px;line-height:20px;font-family:'DejaVu Sans','Liberation Sans',sans-serif;color:#000;transform:scaleX(0.9402);transform-origin:right">محمود سينا</div></div>
<div class="c" style="left:582px;top:876px;width:124px;height:19px"><div class="a t" dir="rtl" style="right:2px;top:1px;font-size:13px;line-height:20px;font-family:'DejaVu Sans','Liberation Sans',sans-serif;color:#000;transform:scaleX(0.8345);transform-origin:right">شهر اراک</div></div>
<div class="a" style="left:810px;top:876px;width:1px;height:19px;background:#fff;"></div>
<div class="c" style="left:707px;top:876px;width:167px;height:19px"><div class="a t" style="left:3px;top:1px;font-size:13px;line-height:20px;font-family:'Liberation Sans','DejaVu Sans',sans-serif;color:#000;letter-spacing:0.443px;">mahmoodsina@irimc.org</div></div>
<div class="c" style="left:875px;top:876px;width:63px;height:19px"><div class="a t" dir="rtl" style="right:2px;top:1px;font-size:13px;line-height:20px;font-family:'DejaVu Sans','Liberation Sans',sans-serif;color:#000;transform:scaleX(0.7881);transform-origin:right">مرکزی</div></div>
<div class="c" style="left:939px;top:876px;width:63px;height:19px"><div class="a t" dir="rtl" style="right:2px;top:1px;font-size:13px;line-height:20px;font-family:'DejaVu Sans','Liberation Sans',sans-serif;color:#000;transform:scaleX(0.7756);transform-origin:right">اراک</div></div>
<div class="c" style="left:1003px;top:876px;width:93px;height:19px"><div class="a t" dir="rtl" style="right:2px;top:1px;font-size:13px;line-height:20px;font-family:'DejaVu Sans','Liberation Sans',sans-serif;color:#000;transform:scaleX(0.9249);transform-origin:right">پزشكان متخصص</div></div>
<div class="c" style="left:1097px;top:876px;width:63px;height:19px"><div class="a t" dir="rtl" style="right:2px;top:1px;font-size:13px;line-height:20px;font-family:'DejaVu Sans','Liberation Sans',sans-serif;color:#000;transform:scaleX(0.86);transform-origin:right">طب و پزشكي</div></div>
<div class="c" style="left:25px;top:896px;width:233px;height:19px"><div class="a t" dir="rtl" style="right:2px;top:1px;font-size:13px;line-height:20px;font-family:'DejaVu Sans','Liberation Sans',sans-serif;color:#000;transform:scaleX(0.965);transform-origin:right">متخصص بيماريهاي پوست دكتر آمنه علائين</div></div>
<div class="c" style="left:259px;top:896px;width:95px;height:19px;color:#000;font-size:12.6px;line-height:20px"><span class="a" style="right:50px;top:1px">912</span><span class="a" style="right:2px;top:1px">722</span></div>
<div class="c" style="left:355px;top:896px;width:107px;height:19px;color:#000;font-size:12.6px;line-height:20px"><span class="a" style="right:50px;top:1px">912</span><span class="a" style="right:2px;top:1px">722</span></div>
<div class="c" style="left:463px;top:896px;width:118px;height:19px"><div class="a t" dir="rtl" style="right:2px;top:1px;font-size:13px;line-height:20px;font-family:'DejaVu Sans','Liberation Sans',sans-serif;color:#000;transform:scaleX(0.9682);transform-origin:right">آمنه علائين</div></div>
<div class="c" style="left:582px;top:896px;width:124px;height:19px"><div class="a t" dir="rtl" style="right:2px;top:1px;font-size:13px;line-height:20px;font-family:'DejaVu Sans','Liberation Sans',sans-serif;color:#000;transform:scaleX(0.8345);transform-origin:right">شهر اراک</div></div>
<div class="c" style="left:707px;top:896px;width:231px;height:19px"><div class="a t" dir="rtl" style="right:2px;top:1px;font-size:13px;line-height:20px;font-family:'DejaVu Sans','Liberation Sans',sans-serif;color:#000;transform:scaleX(0.7881);transform-origin:right">مرکزی</div></div>
<div class="c" style="left:939px;top:896px;width:63px;height:19px"><div class="a t" dir="rtl" style="right:2px;top:1px;font-size:13px;line-height:20px;font-family:'DejaVu Sans','Liberation Sans',sans-serif;color:#000;transform:scaleX(0.7756);transform-origin:right">اراک</div></div>
<div class="c" style="left:1003px;top:896px;width:93px;height:19px"><div class="a t" dir="rtl" style="right:2px;top:1px;font-size:13px;line-height:20px;font-family:'DejaVu Sans','Liberation Sans',sans-serif;color:#000;transform:scaleX(0.9249);transform-origin:right">پزشكان متخصص</div></div>
<div class="c" style="left:1097px;top:896px;width:63px;height:19px"><div class="a t" dir="rtl" style="right:2px;top:1px;font-size:13px;line-height:20px;font-family:'DejaVu Sans','Liberation Sans',sans-serif;color:#000;transform:scaleX(0.86);transform-origin:right">طب و پزشكي</div></div>
<div class="c" style="left:25px;top:916px;width:233px;height:19px"><div class="a t" dir="rtl" style="right:2px;top:1px;font-size:13px;line-height:20px;font-family:'DejaVu Sans','Liberation Sans',sans-serif;color:#000;transform:scaleX(0.9086);transform-origin:right">متخصص بيماريهاي پوست دكتر علی فرنقی</div></div>
<div class="c" style="left:259px;top:916px;width:95px;height:19px;color:#000;font-size:12.6px;line-height:20px"><span class="a" style="right:50px;top:1px">912</span><span class="a" style="right:2px;top:1px">772</span></div>
<div class="c" style="left:355px;top:916px;width:107px;height:19px;color:#000;font-size:12.6px;line-height:20px"><span class="a" style="right:50px;top:1px">912</span><span class="a" style="right:2px;top:1px">772</span></div>
<div class="c" style="left:463px;top:916px;width:118px;height:19px"><div class="a t" dir="rtl" style="right:2px;top:1px;font-size:13px;line-height:20px;font-family:'DejaVu Sans','Liberation Sans',sans-serif;color:#000;transform:scaleX(0.7567);transform-origin:right">علی فرنقی</div></div>
<div class="c" style="left:582px;top:916px;width:124px;height:19px"><div class="a t" dir="rtl" style="right:2px;top:1px;font-size:13px;line-height:20px;font-family:'DejaVu Sans','Liberation Sans',sans-serif;color:#000;transform:scaleX(0.8428);transform-origin:right">شهر تهران</div></div>
<div class="a" style="left:810px;top:916px;width:1px;height:19px;background:#fff;"></div>
<div class="c" style="left:707px;top:916px;width:167px;height:19px"><div class="a t" style="left:3px;top:1px;font-size:13px;line-height:20px;font-family:'Liberation Sans','DejaVu Sans',sans-serif;color:#000;letter-spacing:-0.303px;">ALIFARNAGHI@YAHOO</div></div>
<div class="c" style="left:875px;top:916px;width:63px;height:19px"><div class="a t" dir="rtl" style="right:2px;top:1px;font-size:13px;line-height:20px;font-family:'DejaVu Sans','Liberation Sans',sans-serif;color:#000;transform:scaleX(0.8346);transform-origin:right">تهران</div></div>
<div class="c" style="left:939px;top:916px;width:63px;height:19px"><div class="a t" dir="rtl" style="right:2px;top:1px;font-size:13px;line-height:20px;font-family:'DejaVu Sans','Liberation Sans',sans-serif;color:#000;transform:scaleX(0.8346);transform-origin:right">تهران</div></div>
<div class="c" style="left:1003px;top:916px;width:93px;height:19px"><div class="a t" dir="rtl" style="right:2px;top:1px;font-size:13px;line-height:20px;font-family:'DejaVu Sans','Liberation Sans',sans-serif;color:#000;transform:scaleX(0.9249);transform-origin:right">پزشكان متخصص</div></div>
<div class="c" style="left:1097px;top:916px;width:63px;height:19px"><div class="a t" dir="rtl" style="right:2px;top:1px;font-size:13px;line-height:20px;font-family:'DejaVu Sans','Liberation Sans',sans-serif;color:#000;transform:scaleX(0.86);transform-origin:right">طب و پزشكي</div></div>
<div class="c" style="left:25px;top:936px;width:233px;height:19px"><div class="a t" dir="rtl" style="right:2px;top:1px;font-size:13px;line-height:20px;font-family:'DejaVu Sans','Liberation Sans',sans-serif;color:#000;transform:scaleX(0.9119);transform-origin:right">متخصص بيماريهاي پوست دكتر فرشاد فرنقی</div></div>
<div class="c" style="left:259px;top:936px;width:95px;height:19px;color:#000;font-size:12.6px;line-height:20px"><span class="a" style="right:50px;top:1px">912</span><span class="a" style="right:2px;top:1px">568</span></div>
<div class="c" style="left:355px;top:936px;width:107px;height:19px;color:#000;font-size:12.6px;line-height:20px"><span class="a" style="right:50px;top:1px">912</span><span class="a" style="right:2px;top:1px">568</span></div>
<div class="c" style="left:463px;top:936px;width:118px;height:19px"><div class="a t" dir="rtl" style="right:2px;top:1px;font-size:13px;line-height:20px;font-family:'DejaVu Sans','Liberation Sans',sans-serif;color:#000;transform:scaleX(0.7907);transform-origin:right">فرشاد فرنقی</div></div>
<div class="c" style="left:582px;top:936px;width:124px;height:19px"><div class="a t" dir="rtl" style="right:2px;top:1px;font-size:13px;line-height:20px;font-family:'DejaVu Sans','Liberation Sans',sans-serif;color:#000;transform:scaleX(0.8428);transform-origin:right">شهر تهران</div></div>
<div class="c" style="left:707px;top:936px;width:231px;height:19px"><div class="a t" dir="rtl" style="right:2px;top:1px;font-size:13px;line-height:20px;font-family:'DejaVu Sans','Liberation Sans',sans-serif;color:#000;transform:scaleX(0.8346);transform-origin:right">تهران</div></div>
<div class="c" style="left:939px;top:936px;width:63px;height:19px"><div class="a t" dir="rtl" style="right:2px;top:1px;font-size:13px;line-height:20px;font-family:'DejaVu Sans','Liberation Sans',sans-serif;color:#000;transform:scaleX(0.8346);transform-origin:right">تهران</div></div>
<div class="c" style="left:1003px;top:936px;width:93px;height:19px"><div class="a t" dir="rtl" style="right:2px;top:1px;font-size:13px;line-height:20px;font-family:'DejaVu Sans','Liberation Sans',sans-serif;color:#000;transform:scaleX(0.9249);transform-origin:right">پزشكان متخصص</div></div>
<div class="c" style="left:1097px;top:936px;width:63px;height:19px"><div class="a t" dir="rtl" style="right:2px;top:1px;font-size:13px;line-height:20px;font-family:'DejaVu Sans','Liberation Sans',sans-serif;color:#000;transform:scaleX(0.86);transform-origin:right">طب و پزشكي</div></div>
<div class="c" style="left:25px;top:956px;width:233px;height:19px"><div class="a t" dir="rtl" style="right:2px;top:1px;font-size:13px;line-height:20px;font-family:'DejaVu Sans','Liberation Sans',sans-serif;color:#000;transform:scaleX(0.9399);transform-origin:right">متخصص بيماريهاي پوست دكتر حبيبه فريدني</div></div>
<div class="c" style="left:259px;top:956px;width:95px;height:19px;color:#000;font-size:12.6px;line-height:20px"><span class="a" style="right:50px;top:1px">912</span><span class="a" style="right:2px;top:1px">922</span></div>
<div class="c" style="left:355px;top:956px;width:107px;height:19px;color:#000;font-size:12.6px;line-height:20px"><span class="a" style="right:50px;top:1px">912</span><span class="a" style="right:2px;top:1px">922</span></div>
<div class="c" style="left:463px;top:956px;width:118px;height:19px"><div class="a t" dir="rtl" style="right:2px;top:1px;font-size:13px;line-height:20px;font-family:'DejaVu Sans','Liberation Sans',sans-serif;color:#000;transform:scaleX(0.8815);transform-origin:right">حبيبه فريدني</div></div>
<div class="c" style="left:582px;top:956px;width:124px;height:19px"><div class="a t" dir="rtl" style="right:2px;top:1px;font-size:13px;line-height:20px;font-family:'DejaVu Sans','Liberation Sans',sans-serif;color:#000;transform:scaleX(0.8428);transform-origin:right">شهر تهران</div></div>
<div class="c" style="left:707px;top:956px;width:231px;height:19px"><div class="a t" dir="rtl" style="right:2px;top:1px;font-size:13px;line-height:20px;font-family:'DejaVu Sans','Liberation Sans',sans-serif;color:#000;transform:scaleX(0.8346);transform-origin:right">تهران</div></div>
<div class="c" style="left:939px;top:956px;width:63px;height:19px"><div class="a t" dir="rtl" style="right:2px;top:1px;font-size:13px;line-height:20px;font-family:'DejaVu Sans','Liberation Sans',sans-serif;color:#000;transform:scaleX(0.8346);transform-origin:right">تهران</div></div>
<div class="c" style="left:1003px;top:956px;width:93px;height:19px"><div class="a t" dir="rtl" style="right:2px;top:1px;font-size:13px;line-height:20px;font-family:'DejaVu Sans','Liberation Sans',sans-serif;color:#000;transform:scaleX(0.9249);transform-origin:right">پزشكان متخصص</div></div>
<div class="c" style="left:1097px;top:956px;width:63px;height:19px"><div class="a t" dir="rtl" style="right:2px;top:1px;font-size:13px;line-height:20px;font-family:'DejaVu Sans','Liberation Sans',sans-serif;color:#000;transform:scaleX(0.86);transform-origin:right">طب و پزشكي</div></div>
<div class="c" style="left:25px;top:976px;width:233px;height:14px"><div class="a t" dir="rtl" style="right:2px;top:1px;font-size:13px;line-height:20px;font-family:'DejaVu Sans','Liberation Sans',sans-serif;color:#000;transform:scaleX(0.93);transform-origin:right">متخصص بيماريهاي پوست دكتر علی رضا فرهادپور</div></div>
<div class="c" style="left:259px;top:976px;width:95px;height:14px;color:#000;font-size:12.6px;line-height:20px"><span class="a" style="right:50px;top:1px">918</span><span class="a" style="right:2px;top:1px">564</span></div>
<div class="c" style="left:355px;top:976px;width:107px;height:14px;color:#000;font-size:12.6px;line-height:20px"><span class="a" style="right:50px;top:1px">918</span><span class="a" style="right:2px;top:1px">564</span></div>
<div class="c" style="left:463px;top:976px;width:118px;height:14px"><div class="a t" dir="rtl" style="right:2px;top:1px;font-size:13px;line-height:20px;font-family:'DejaVu Sans','Liberation Sans',sans-serif;color:#000;transform:scaleX(0.86);transform-origin:right">علی رضا فرهادپور</div></div>
<div class="c" style="left:582px;top:976px;width:124px;height:14px"><div class="a t" dir="rtl" style="right:2px;top:1px;font-size:13px;line-height:20px;font-family:'DejaVu Sans','Liberation Sans',sans-serif;color:#000;transform:scaleX(0.8345);transform-origin:right">شهر اراک</div></div>
<div class="c" style="left:707px;top:976px;width:231px;height:14px"><div class="a t" dir="rtl" style="right:2px;top:1px;font-size:13px;line-height:20px;font-family:'DejaVu Sans','Liberation Sans',sans-serif;color:#000;transform:scaleX(0.7881);transform-origin:right">مرکزی</div></div>
<div class="c" style="left:939px;top:976px;width:63px;height:14px"><div class="a t" dir="rtl" style="right:2px;top:1px;font-size:13px;line-height:20px;font-family:'DejaVu Sans','Liberation Sans',sans-serif;color:#000;transform:scaleX(0.7756);transform-origin:right">اراک</div></div>
<div class="c" style="left:1003px;top:976px;width:93px;height:14px"><div class="a t" dir="rtl" style="right:2px;top:1px;font-size:13px;line-height:20px;font-family:'DejaVu Sans','Liberation Sans',sans-serif;color:#000;transform:scaleX(0.9249);transform-origin:right">پزشكان متخصص</div></div>
<div class="c" style="left:1097px;top:976px;width:63px;height:14px"><div class="a t" dir="rtl" style="right:2px;top:1px;font-size:13px;line-height:20px;font-family:'DejaVu Sans','Liberation Sans',sans-serif;color:#000;transform:scaleX(0.86);transform-origin:right">طب و پزشكي</div></div>
<div class="a" style="left:303px;top:296px;width:29px;height:694px;background:#000;"></div>
<div class="a" style="left:411px;top:296px;width:29px;height:694px;background:#000;"></div>
<div class="a" style="left:24px;top:274px;width:236px;height:23px;border:2px solid #217346;box-sizing:border-box"></div>
<div class="a" style="left:255px;top:292px;width:7px;height:7px;background:#fff;"></div>
<div class="a" style="left:256px;top:293px;width:5px;height:5px;background:#217346;"></div>
<div class="a" style="left:26px;top:274px;width:233px;height:2px;background:#217346;"></div>
<div class="a" style="left:23px;top:276px;width:2px;height:19px;background:#217346;"></div>
<div class="a" style="left:1899px;top:256px;width:21px;height:734px;background:#e6e6e6;"></div>
<div class="a" style="left:1898px;top:276px;width:1px;height:714px;background:#b4b4b4;"></div>
<div class="a" style="left:1902px;top:259px;width:15px;height:731px;background:#d8d8d8;"></div>
<div class="a" style="left:1902px;top:258px;width:15px;height:15px;background:#fff;border:1px solid #777;box-sizing:border-box;"></div>
<svg class="a" style="left:1905.5px;top:263px;" width="8" height="5" viewBox="0 0 8 5"><path d="M0 5 L4 0.5 L8 5 Z" fill="#606060"/></svg>
<div class="a" style="left:1902px;top:273px;width:15px;height:17px;background:#fff;border:1px solid #777;box-sizing:border-box;"></div>
<div class="a" style="left:1902px;top:976px;width:15px;height:15px;background:#fff;border:1px solid #777;box-sizing:border-box;"></div>
<svg class="a" style="left:1905.5px;top:981.5px;" width="8" height="5" viewBox="0 0 8 5"><path d="M0 0 L4 4.5 L8 0 Z" fill="#606060"/></svg>
<svg class="a" style="left:21px;top:10px;" width="16" height="16" viewBox="0 0 16 16"><rect x="0.7" y="0.8" width="14.6" height="14.2" rx="0.8" fill="#fff"/><rect x="3.2" y="2" width="9.2" height="5.6" fill="#217346"/><rect x="4" y="10" width="8" height="4" fill="#217346"/><rect x="7" y="11" width="2.2" height="3" fill="#fff"/></svg>
<svg class="a" style="left:50px;top:9px;" width="16" height="16" viewBox="0 0 16 16"><path d="M3 6 H9.5 A4.2 4.2 0 0 1 9.5 14.4 H7.5" fill="none" stroke="#4f916d" stroke-width="2.2"/><path d="M6.8 1.8 L2.6 6 L6.8 10.2" fill="none" stroke="#4f916d" stroke-width="2.2"/></svg>
<svg class="a" style="left:71.5px;top:12.5px;" width="7" height="5" viewBox="0 0 7 5"><path d="M1 1 L3.5 4 L6 1" fill="none" stroke="#3f8560" stroke-width="1.6"/></svg>
<svg class="a" style="left:89px;top:9px;" width="16" height="16" viewBox="0 0 16 16"><path d="M13 6 H6.5 A4.2 4.2 0 0 0 6.5 14.4 H8.5" fill="none" stroke="#4f916d" stroke-width="2.2"/><path d="M9.2 1.8 L13.4 6 L9.2 10.2" fill="none" stroke="#4f916d" stroke-width="2.2"/></svg>
<svg class="a" style="left:110.5px;top:12.5px;" width="7" height="5" viewBox="0 0 7 5"><path d="M1 1 L3.5 4 L6 1" fill="none" stroke="#3f8560" stroke-width="1.6"/></svg>
<div class="a" style="left:132.5px;top:15px;width:7px;height:1.3px;background:#fff;"></div>
<svg class="a" style="left:132.5px;top:17.8px;" width="7" height="4" viewBox="0 0 7 4"><path d="M0 0 H7 L3.5 3.6 Z" fill="#fff"/></svg>
<div class="a t" style="top:7.5px;font-size:12px;line-height:17px;color:#fff;left:862px;letter-spacing:-0.002px;">Beauty-and-skin-doctor.xlsx  -  Excel</div>
<div class="a" style="left:1668px;top:7px;width:58px;height:19px;background:#fff;"></div>
<div class="a t" style="top:8.8px;font-size:12px;line-height:17px;color:#217346;left:1679px;letter-spacing:-0.100px;">Sign in</div>
<svg class="a" style="left:1751.5px;top:10px;" width="14" height="11.5" viewBox="0 0 15 12"><rect x="0.75" y="0.75" width="13.5" height="10.5" fill="none" stroke="#fff" stroke-width="1.3"/><path d="M0.75 3.5 H14.25" stroke="#fff" stroke-width="1.2"/><path d="M7.5 9.5 V5.5 M5.5 7.3 L7.5 5.3 L9.5 7.3" fill="none" stroke="#fff" stroke-width="1.1"/></svg>
<div class="a" style="left:1800px;top:14.5px;width:11px;height:1.3px;background:#fff;"></div>
<svg class="a" style="left:1846px;top:11px;" width="10.5" height="10.5" viewBox="0 0 12 12"><rect x="0.7" y="2.7" width="8.6" height="8.6" rx="1.2" fill="none" stroke="#fff" stroke-width="1.3"/><path d="M3 2.7 V1.8 Q3 0.7 4.1 0.7 H10 Q11.3 0.7 11.3 2 V8 Q11.3 9 10.3 9 H9.5" fill="none" stroke="#fff" stroke-width="1.3"/></svg>
<svg class="a" style="left:1891px;top:10px;" width="12" height="12" viewBox="0 0 12 12"><path d="M0.5 0.5 L11.5 11.5 M11.5 0.5 L0.5 11.5" stroke="#fff" stroke-width="1.4"/></svg>
<div class="a t" style="top:40.5px;font-size:13px;line-height:18px;color:#444;left:17px;letter-spacing:-0.488px;">File</div>
<div class="a t" style="top:40.5px;font-size:13px;line-height:18px;color:#444;left:133px;letter-spacing:-0.086px;">Insert</div>
<div class="a t" style="top:40.5px;font-size:13px;line-height:18px;color:#444;left:196px;letter-spacing:-0.183px;">Page Layout</div>
<div class="a t" style="top:40.5px;font-size:13px;line-height:18px;color:#444;left:297px;letter-spacing:-0.148px;">Formulas</div>
<div class="a t" style="top:40.5px;font-size:13px;line-height:18px;color:#444;left:379px;letter-spacing:-0.117px;">Data</div>
<div class="a t" style="top:40.5px;font-size:13px;line-height:18px;color:#444;left:435px;letter-spacing:-0.438px;">Review</div>
<div class="a t" style="top:40.5px;font-size:13px;line-height:18px;color:#444;left:503px;letter-spacing:-0.238px;">View</div>
<div class="a t" style="top:40.5px;font-size:13px;line-height:18px;color:#444;left:558px;letter-spacing:0.062px;">Help</div>
<div class="a t" style="top:40.5px;font-size:13px;line-height:18px;color:#2b2b2b;left:68px;font-weight:bold;letter-spacing:0.219px;">Home</div>
<div class="a" style="left:68px;top:59px;width:38px;height:3px;background:#217346;"></div>
<svg class="a" style="left:624px;top:41px;" width="14" height="18" viewBox="0 0 14 18"><path d="M7 1.2 A4.8 4.8 0 0 1 10.2 9.6 Q9.6 10.5 9.6 12 H4.4 Q4.4 10.5 3.8 9.6 A4.8 4.8 0 0 1 7 1.2 Z" fill="none" stroke="#555" stroke-width="1.1"/><path d="M4.8 14 H9.2 M5.4 16 H8.6" stroke="#555" stroke-width="1.1"/></svg>
<div class="a t" style="top:40.5px;font-size:13px;line-height:18px;color:#444;left:653px;letter-spacing:0.133px;">Tell me what you want to do</div>
<div class="a" style="left:1841px;top:38px;width:67px;height:23px;background:#fff;border:1px solid #e1dfdd;box-sizing:border-box;"></div>
<svg class="a" style="left:1848px;top:43px;" width="13" height="12" viewBox="0 0 13 12"><path d="M1 5.5 V11 H10.5 V8" fill="none" stroke="#217346" stroke-width="1.2"/><path d="M3.5 8 Q4 3.5 9 3.5 M7 1 L9.8 3.5 L7 6" fill="none" stroke="#217346" stroke-width="1.2"/></svg>
<div class="a t" style="top:40.5px;font-size:13px;line-height:18px;color:#217346;left:1864px;font-weight:bold;letter-spacing:-0.428px;">Share</div>
<svg class="a" style="left:15px;top:70px;" width="32" height="33" viewBox="0 0 32 33"><rect x="2.2" y="6" width="23.2" height="24" rx="1" fill="#f0c878"/><rect x="2.2" y="6" width="23.2" height="24" rx="1" fill="none" stroke="#e6b860" stroke-width="0.8"/>
<path d="M7.5 5 H11 A2.8 2.8 0 0 1 16.6 5 H20.2 V9 H7.5 Z" fill="#6e6e6e"/><circle cx="13.8" cy="4.8" r="1.1" fill="#f3f2f1"/>
<path d="M16.8 14 H26 L30.2 18.2 V31.5 H16.8 Z" fill="#fff" stroke="#7a7a7a" stroke-width="1"/><path d="M26 14 V18.2 H30.2" fill="none" stroke="#7a7a7a" stroke-width="1"/></svg>
<div class="a t" style="top:105px;font-size:12px;line-height:17px;color:#444;left:15px;letter-spacing:-0.438px;">Paste</div>
<svg class="a" style="left:24.8px;top:125.6px;" width="7.4" height="4.8" viewBox="0 0 7.4 4.8"><path d="M1 1 L3.7 3.8 L6.4 1" fill="none" stroke="#505050" stroke-width="1.25"/></svg>
<svg class="a" style="left:53px;top:71px;" width="16" height="16" viewBox="0 0 16 16"><path d="M4.2 1 L10.5 10.5 M11.8 1 L5.5 10.5" stroke="#4a4a4a" stroke-width="1.8" fill="none"/><circle cx="4" cy="12.3" r="2.2" fill="none" stroke="#3a74c4" stroke-width="1.3"/><circle cx="12" cy="12.3" r="2.2" fill="none" stroke="#3a74c4" stroke-width="1.3"/></svg>
<div class="a t" style="top:72px;font-size:12px;line-height:17px;color:#444;left:73px;letter-spacing:-0.229px;">Cut</div>
<svg class="a" style="left:53px;top:95px;" width="16" height="17" viewBox="0 0 16 17"><path d="M0.5 1.5 H5.5 L8 4 V11 H0.5 Z" fill="#fff" stroke="#5a5a5a" stroke-width="1"/><path d="M2 4.5 H4.5 M2 6.5 H4.5 M2 8.5 H4.5" stroke="#5a5a5a" stroke-width="0.9"/><path d="M6.5 5.5 H12 L14.8 8.3 V15.5 H6.5 Z" fill="#fff" stroke="#5a5a5a" stroke-width="1"/><path d="M12 5.5 V8.3 H14.8" fill="none" stroke="#5a5a5a" stroke-width="0.8"/><path d="M8.3 10 H13 M8.3 12 H13 M8.3 13.8 H13" stroke="#5a5a5a" stroke-width="0.9"/></svg>
<div class="a t" style="top:96px;font-size:12px;line-height:17px;color:#444;left:73px;letter-spacing:-0.254px;">Copy</div>
<svg class="a" style="left:109.8px;top:100.6px;" width="7.4" height="4.8" viewBox="0 0 7.4 4.8"><path d="M1 1 L3.7 3.8 L6.4 1" fill="none" stroke="#505050" stroke-width="1.25"/></svg>
<svg class="a" style="left:52px;top:119px;" width="18" height="16" viewBox="0 0 18 16"><path d="M10 4 L14.5 0.8 L17 3.8 L12.5 7.5 Z" fill="#555"/><path d="M7.5 5.5 L10 4 L12.5 7.5 L10.5 9.5 Z" fill="#8a8a8a"/><path d="M1 9 L7.5 5.5 L10.5 9.5 L6 15 Q3.5 13.5 1 9 Z" fill="#f0c060"/></svg>
<div class="a t" style="top:120px;font-size:12px;line-height:17px;color:#444;left:72px;letter-spacing:-0.097px;">Format Painter</div>
<div class="a t" style="top:145px;font-size:12px;line-height:17px;color:#444;left:48px;letter-spacing:-0.042px;">Clipboard</div>
<svg class="a" style="left:153px;top:148px;" width="9" height="9" viewBox="0 0 9 9"><path d="M0.6 5.5 V0.6 H5.5" fill="none" stroke="#555" stroke-width="1.2"/><path d="M3 3 L7.6 7.6 M7.8 3.8 V7.8 H3.8" fill="none" stroke="#555" stroke-width="1.2"/></svg>
<div class="a" style="left:164px;top:68px;width:1px;height:89px;background:#d2d0ce;"></div>
<div class="a" style="left:173px;top:76px;width:123px;height:23px;background:#fff;border:1px solid #c8c6c4;box-sizing:border-box;"></div>
<div class="a t" style="top:79.5px;font-size:12px;line-height:17px;color:#222;left:176.5px;letter-spacing:-0.145px;">Calibri</div>
<svg class="a" style="left:285.5px;top:86.5px;" width="6" height="3" viewBox="0 0 6 3"><path d="M0 0 L6 0 L3 3 Z" fill="#444"/></svg>
<div class="a" style="left:298px;top:76px;width:43px;height:23px;background:#fff;border:1px solid #c8c6c4;box-sizing:border-box;"></div>
<div class="a t" style="top:79.5px;font-size:12px;line-height:17px;color:#222;left:301.5px;letter-spacing:0.3px;">11</div>
<svg class="a" style="left:330px;top:86.5px;" width="6" height="3" viewBox="0 0 6 3"><path d="M0 0 L6 0 L3 3 Z" fill="#444"/></svg>
<div class="a t" style="top:76.5px;font-size:14px;line-height:20px;color:#3b3b3b;left:349px;">A</div>
<svg class="a" style="left:357.5px;top:79.5px;" width="5" height="3" viewBox="0 0 5 3"><path d="M0 3 L2.5 0 L5 3 Z" fill="#3a74c4"/></svg>
<div class="a t" style="top:80.2px;font-size:11px;line-height:15px;color:#3b3b3b;left:374.5px;">A</div>
<svg class="a" style="left:381.5px;top:80px;" width="5" height="3" viewBox="0 0 5 3"><path d="M0 0 L5 0 L2.5 3 Z" fill="#3a74c4"/></svg>
<div class="a t" style="top:110.5px;font-size:13px;line-height:18px;color:#3b3b3b;left:178.5px;font-weight:bold;">B</div>
<div class="a t" style="top:110.5px;font-size:13px;line-height:18px;color:#3b3b3b;left:205px;font-weight:bold;font-style:italic;font-family:'Liberation Serif',serif;">I</div>
<div class="a t" style="top:110px;font-size:13px;line-height:18px;color:#3b3b3b;left:226.5px;font-weight:bold;">U</div>
<div class="a" style="left:227px;top:126px;width:10px;height:1.2px;background:#3b3b3b;"></div>
<svg class="a" style="left:245.8px;top:117.1px;" width="7.4" height="4.8" viewBox="0 0 7.4 4.8"><path d="M1 1 L3.7 3.8 L6.4 1" fill="none" stroke="#505050" stroke-width="1.25"/></svg>
<div class="a" style="left:262px;top:108px;width:1px;height:22px;background:#dcdad8;"></div>
<svg class="a" style="left:270px;top:112px;" width="15" height="15" viewBox="0 0 15 15"><rect x="1" y="1" width="13" height="13" fill="none" stroke="#555" stroke-width="1" stroke-dasharray="1 1"/><path d="M7.5 1 V14 M1 7.5 H14" stroke="#555" stroke-width="1" stroke-dasharray="1 1"/><path d="M0.5 14 H14.5" stroke="#333" stroke-width="1.3"/></svg>
<svg class="a" style="left:291.8px;top:117.1px;" width="7.4" height="4.8" viewBox="0 0 7.4 4.8"><path d="M1 1 L3.7 3.8 L6.4 1" fill="none" stroke="#505050" stroke-width="1.25"/></svg>
<div class="a" style="left:309px;top:108px;width:1px;height:22px;background:#dcdad8;"></div>
<svg class="a" style="left:315px;top:108px;" width="19" height="21" viewBox="0 0 19 21"><path d="M4 9 L9.5 3.5 L15 9 L9.5 14 Z" fill="#fff" stroke="#555" stroke-width="1"/><path d="M7 5.5 V2.5 A1.8 1.8 0 0 1 10.6 2.5 V5" fill="none" stroke="#555" stroke-width="1"/><path d="M15.5 8.5 Q18 11.5 16.5 13 Q15 13.5 15 11 Z" fill="#3a74c4"/><rect x="0.5" y="16" width="16" height="4" fill="#ffee00"/></svg>
<svg class="a" style="left:337.8px;top:117.1px;" width="7.4" height="4.8" viewBox="0 0 7.4 4.8"><path d="M1 1 L3.7 3.8 L6.4 1" fill="none" stroke="#505050" stroke-width="1.25"/></svg>
<div class="a t" style="top:108.5px;font-size:13px;line-height:18px;color:#3b3b3b;left:359px;">A</div>
<div class="a" style="left:355px;top:124px;width:16px;height:4px;background:#e81123;"></div>
<svg class="a" style="left:376.8px;top:117.1px;" width="7.4" height="4.8" viewBox="0 0 7.4 4.8"><path d="M1 1 L3.7 3.8 L6.4 1" fill="none" stroke="#505050" stroke-width="1.25"/></svg>
<div class="a t" style="top:145px;font-size:12px;line-height:17px;color:#444;left:260px;letter-spacing:-0.004px;">Font</div>
<svg class="a" style="left:385px;top:148px;" width="9" height="9" viewBox="0 0 9 9"><path d="M0.6 5.5 V0.6 H5.5" fill="none" stroke="#555" stroke-width="1.2"/><path d="M3 3 L7.6 7.6 M7.8 3.8 V7.8 H3.8" fill="none" stroke="#555" stroke-width="1.2"/></svg>
<div class="a" style="left:396px;top:68px;width:1px;height:89px;background:#d2d0ce;"></div>
<div class="a" style="left:409px;top:79px;width:14px;height:1px;background:#5c5c5c;"></div>
<div class="a" style="left:409px;top:82px;width:14px;height:1px;background:#5c5c5c;"></div>
<div class="a" style="left:409px;top:85px;width:14px;height:1px;background:#5c5c5c;"></div>
<div class="a" style="left:433px;top:83px;width:14px;height:1px;background:#5c5c5c;"></div>
<div class="a" style="left:433px;top:86px;width:14px;height:1px;background:#5c5c5c;"></div>
<div class="a" style="left:433px;top:89px;width:14px;height:1px;background:#5c5c5c;"></div>
<div class="a" style="left:453px;top:76px;width:22px;height:23px;background:#c8c6c4;border:1px solid #a8a6a4;box-sizing:border-box;"></div>
<div class="a" style="left:457px;top:89px;width:14px;height:1px;background:#5c5c5c;"></div>
<div class="a" style="left:457px;top:92px;width:14px;height:1px;background:#5c5c5c;"></div>
<div class="a" style="left:457px;top:95px;width:14px;height:1px;background:#5c5c5c;"></div>
<div class="a" style="left:479px;top:76px;width:1px;height:22px;background:#dcdad8;"></div>
<svg class="a" style="left:486px;top:77px;" width="19" height="19" viewBox="0 0 19 19"><text x="0" y="11" font-size="10.5" font-family="Liberation Sans" fill="#3a3a3a" transform="rotate(-45 6 10)">ab</text><path d="M5.5 16.5 L15.5 6.5 M12 6 H16 V10" fill="none" stroke="#505050" stroke-width="1.3"/></svg>
<svg class="a" style="left:506.8px;top:84.6px;" width="7.4" height="4.8" viewBox="0 0 7.4 4.8"><path d="M1 1 L3.7 3.8 L6.4 1" fill="none" stroke="#505050" stroke-width="1.25"/></svg>
<div class="a" style="left:524px;top:76px;width:1px;height:22px;background:#dcdad8;"></div>
<svg class="a" style="left:533px;top:82px;" width="14" height="10" viewBox="0 0 14 10"><path d="M0.8 0.8 L4.8 4.4 L0.8 8 Z" fill="#3a74c4"/><path d="M8 0.8 H12.8 M9.4 0.8 V9 M11.6 0.8 V9" stroke="#444" stroke-width="1.1" fill="none"/><path d="M9.4 0.8 A2.3 2.3 0 0 0 9.4 5.4 Z" fill="#444"/></svg>
<svg class="a" style="left:553.8px;top:84.6px;" width="7.4" height="4.8" viewBox="0 0 7.4 4.8"><path d="M1 1 L3.7 3.8 L6.4 1" fill="none" stroke="#505050" stroke-width="1.25"/></svg>
<div class="a" style="left:570px;top:72px;width:1px;height:60px;background:#dcdad8;"></div>
<svg class="a" style="left:578px;top:78px;" width="18" height="18" viewBox="0 0 18 18"><text x="1.5" y="8.5" font-size="10.5" font-family="Liberation Sans" fill="#333">ab</text><text x="2" y="16.5" font-size="10.5" font-family="Liberation Sans" fill="#333">c</text><path d="M13.5 11 V13.8 H9 M10.6 12.2 L9 13.8 L10.6 15.4" fill="none" stroke="#3a74c4" stroke-width="1"/></svg>
<div class="a t" style="top:79.8px;font-size:12px;line-height:17px;color:#444;left:597px;letter-spacing:-0.120px;">Wrap Text</div>
<div class="a" style="left:409px;top:114px;width:14px;height:1px;background:#5c5c5c;"></div>
<div class="a" style="left:409px;top:117px;width:10px;height:1px;background:#5c5c5c;"></div>
<div class="a" style="left:409px;top:120px;width:14px;height:1px;background:#5c5c5c;"></div>
<div class="a" style="left:409px;top:123px;width:10px;height:1px;background:#5c5c5c;"></div>
<div class="a" style="left:433px;top:114px;width:14px;height:1px;background:#5c5c5c;"></div>
<div class="a" style="left:435px;top:117px;width:10px;height:1px;background:#5c5c5c;"></div>
<div class="a" style="left:433px;top:120px;width:14px;height:1px;background:#5c5c5c;"></div>
<div class="a" style="left:435px;top:123px;width:10px;height:1px;background:#5c5c5c;"></div>
<div class="a" style="left:457px;top:114px;width:14px;height:1px;background:#5c5c5c;"></div>
<div class="a" style="left:461px;top:117px;width:10px;height:1px;background:#5c5c5c;"></div>
<div class="a" style="left:457px;top:120px;width:14px;height:1px;background:#5c5c5c;"></div>
<div class="a" style="left:461px;top:123px;width:10px;height:1px;background:#5c5c5c;"></div>
<div class="a" style="left:479px;top:108px;width:1px;height:22px;background:#dcdad8;"></div>
<div class="a" style="left:487px;top:112px;width:16px;height:1px;background:#5c5c5c;"></div>
<div class="a" style="left:495px;top:115px;width:8px;height:1px;background:#5c5c5c;"></div>
<div class="a" style="left:495px;top:118px;width:8px;height:1px;background:#5c5c5c;"></div>
<div class="a" style="left:495px;top:121px;width:8px;height:1px;background:#5c5c5c;"></div>
<div class="a" style="left:487px;top:124px;width:16px;height:1px;background:#5c5c5c;"></div>
<svg class="a" style="left:486px;top:114px;" width="9" height="9" viewBox="0 0 9 9"><path d="M8 4.5 H1.5 M4.3 1.5 L1.3 4.5 L4.3 7.5" fill="none" stroke="#3a74c4" stroke-width="1.5"/></svg>
<div class="a" style="left:511px;top:112px;width:16px;height:1px;background:#5c5c5c;"></div>
<div class="a" style="left:519px;top:115px;width:8px;height:1px;background:#5c5c5c;"></div>
<div class="a" style="left:519px;top:118px;width:8px;height:1px;background:#5c5c5c;"></div>
<div class="a" style="left:519px;top:121px;width:8px;height:1px;background:#5c5c5c;"></div>
<div class="a" style="left:511px;top:124px;width:16px;height:1px;background:#5c5c5c;"></div>
<svg class="a" style="left:510px;top:114px;" width="9" height="9" viewBox="0 0 9 9"><path d="M1 4.5 H7.5 M4.7 1.5 L7.7 4.5 L4.7 7.5" fill="none" stroke="#3a74c4" stroke-width="1.5"/></svg>
<svg class="a" style="left:578px;top:111px;" width="15" height="15" viewBox="0 0 15 15"><rect x="0.5" y="0.5" width="14" height="14" fill="none" stroke="#666" stroke-width="1"/><path d="M0.5 4.5 H14.5 M0.5 10.5 H14.5 M5.5 0.5 V4.5 M9.5 0.5 V4.5 M5.5 10.5 V14.5 M9.5 10.5 V14.5" stroke="#666" stroke-width="1"/><path d="M3 7.5 H12 M4.8 6 L3 7.5 L4.8 9 M10.2 6 L12 7.5 L10.2 9" fill="none" stroke="#3a74c4" stroke-width="0.9"/></svg>
<div class="a t" style="top:112px;font-size:12px;line-height:17px;color:#444;left:597px;letter-spacing:0.021px;">Merge &amp; Center</div>
<svg class="a" style="left:691.8px;top:116.6px;" width="7.4" height="4.8" viewBox="0 0 7.4 4.8"><path d="M1 1 L3.7 3.8 L6.4 1" fill="none" stroke="#505050" stroke-width="1.25"/></svg>
<div class="a t" style="top:145px;font-size:12px;line-height:17px;color:#444;left:520px;letter-spacing:-0.042px;">Alignment</div>
<svg class="a" style="left:701px;top:148px;" width="9" height="9" viewBox="0 0 9 9"><path d="M0.6 5.5 V0.6 H5.5" fill="none" stroke="#555" stroke-width="1.2"/><path d="M3 3 L7.6 7.6 M7.8 3.8 V7.8 H3.8" fill="none" stroke="#555" stroke-width="1.2"/></svg>
<div class="a" style="left:712px;top:68px;width:1px;height:89px;background:#d2d0ce;"></div>
<div class="a" style="left:721px;top:76px;width:140px;height:23px;background:#fff;border:1px solid #c8c6c4;box-sizing:border-box;"></div>
<div class="a t" style="top:79.5px;font-size:12px;line-height:17px;color:#222;left:724.5px;letter-spacing:-0.529px;">General</div>
<svg class="a" style="left:850.5px;top:86.5px;" width="6" height="3" viewBox="0 0 6 3"><path d="M0 0 L6 0 L3 3 Z" fill="#444"/></svg>
<svg class="a" style="left:722px;top:110px;" width="20" height="18" viewBox="0 0 20 18"><rect x="1.5" y="1" width="17" height="9" fill="#3a74c4"/><rect x="3" y="2.5" width="14" height="6" fill="#fff"/><circle cx="10" cy="5.5" r="2.2" fill="#3a74c4"/><ellipse cx="12.5" cy="11" rx="5" ry="1.6" fill="#f0b040"/><ellipse cx="12.5" cy="13.3" rx="5" ry="1.6" fill="#f6c868"/><ellipse cx="10" cy="15.8" rx="5" ry="1.6" fill="#f0b040"/></svg>
<svg class="a" style="left:745.8px;top:117.1px;" width="7.4" height="4.8" viewBox="0 0 7.4 4.8"><path d="M1 1 L3.7 3.8 L6.4 1" fill="none" stroke="#505050" stroke-width="1.25"/></svg>
<div class="a t" style="top:109px;font-size:15px;line-height:21px;color:#3b3b3b;left:764.5px;">%</div>
<div class="a t" style="top:104.5px;font-size:16px;line-height:22px;color:#3b3b3b;left:791.5px;font-weight:bold;">,</div>
<div class="a" style="left:810px;top:108px;width:1px;height:22px;background:#dcdad8;"></div>
<svg class="a" style="left:816px;top:110px;" width="18" height="18" viewBox="0 0 18 18"><path d="M2 4.5 H8 M4.4 2 L1.8 4.5 L4.4 7" fill="none" stroke="#3a74c4" stroke-width="1.3"/><text x="9" y="8" font-size="9" font-family="Liberation Sans" fill="#222">.0</text><text x="4.5" y="16.3" font-size="9" font-family="Liberation Sans" fill="#222">.00</text></svg>
<svg class="a" style="left:840px;top:110px;" width="18" height="18" viewBox="0 0 18 18"><text x="4.5" y="8" font-size="9" font-family="Liberation Sans" fill="#222">.00</text><path d="M1.5 12.5 H7.5 M5.1 10 L7.7 12.5 L5.1 15" fill="none" stroke="#3a74c4" stroke-width="1.3"/><text x="9" y="16.3" font-size="9" font-family="Liberation Sans" fill="#222">.0</text></svg>
<div class="a t" style="top:145px;font-size:12px;line-height:17px;color:#444;left:762px;letter-spacing:-0.281px;">Number</div>
<svg class="a" style="left:857px;top:148px;" width="9" height="9" viewBox="0 0 9 9"><path d="M0.6 5.5 V0.6 H5.5" fill="none" stroke="#555" stroke-width="1.2"/><path d="M3 3 L7.6 7.6 M7.8 3.8 V7.8 H3.8" fill="none" stroke="#555" stroke-width="1.2"/></svg>
<div class="a" style="left:868px;top:68px;width:1px;height:89px;background:#d2d0ce;"></div>
<svg class="a" style="left:900px;top:72px;" width="31" height="31" viewBox="0 0 31 31"><rect x="0.5" y="0.5" width="27" height="24" fill="#fff" stroke="#8a8a8a" stroke-width="1"/><path d="M0.5 5.3 H27.5" stroke="#8a8a8a" stroke-width="0.8"/><path d="M0.5 10.1 H27.5" stroke="#8a8a8a" stroke-width="0.8"/><path d="M0.5 14.9 H27.5" stroke="#8a8a8a" stroke-width="0.8"/><path d="M0.5 19.7 H27.5" stroke="#8a8a8a" stroke-width="0.8"/><path d="M7.25 0.5 V24.5" stroke="#8a8a8a" stroke-width="0.8"/><path d="M14 0.5 V24.5" stroke="#8a8a8a" stroke-width="0.8"/><path d="M20.75 0.5 V24.5" stroke="#8a8a8a" stroke-width="0.8"/><rect x="7.5" y="1" width="6" height="4.5" fill="#d9502e"/><rect x="7.5" y="5.8" width="11" height="4.5" fill="#3a74c4"/><rect x="7.5" y="10.6" width="8" height="4.5" fill="#d9502e"/><rect x="7.5" y="15.4" width="4" height="4.5" fill="#3a74c4"/><rect x="7.5" y="20" width="4" height="4" fill="#3a74c4"/><rect x="14.5" y="17.5" width="15" height="12" fill="#fff" stroke="#666" stroke-width="1"/><path d="M18 22 H26 M18 25 H26 M24.5 19.5 L19.5 27.5" stroke="#444" stroke-width="1"/></svg>
<div class="a t" style="top:105px;font-size:12px;line-height:17px;color:#444;left:883px;letter-spacing:0.178px;">Conditional</div>
<div class="a t" style="top:121px;font-size:12px;line-height:17px;color:#444;left:879px;letter-spacing:0.114px;">Formatting</div>
<svg class="a" style="left:940.8px;top:125.6px;" width="7.4" height="4.8" viewBox="0 0 7.4 4.8"><path d="M1 1 L3.7 3.8 L6.4 1" fill="none" stroke="#505050" stroke-width="1.25"/></svg>
<svg class="a" style="left:967px;top:74px;" width="31" height="29" viewBox="0 0 31 29"><rect x="0.5" y="0.5" width="24" height="20" fill="#fff" stroke="#8a8a8a" stroke-width="1"/><rect x="6.5" y="5.5" width="18" height="15" fill="#b4c7e7"/><path d="M0.5 5.5 H24.5" stroke="#8a8a8a" stroke-width="0.8"/><path d="M0.5 10.5 H24.5" stroke="#8a8a8a" stroke-width="0.8"/><path d="M0.5 15.5 H24.5" stroke="#8a8a8a" stroke-width="0.8"/><path d="M6.5 0.5 V20.5" stroke="#8a8a8a" stroke-width="0.8"/><path d="M12.5 0.5 V20.5" stroke="#8a8a8a" stroke-width="0.8"/><path d="M18.5 0.5 V20.5" stroke="#8a8a8a" stroke-width="0.8"/><path d="M29.5 6 L19 18.5 L16.5 16.5 L27.5 5 Z" fill="#6e6e6e"/><path d="M16.5 16.5 L19 18.5 Q17 26 7 27 Q12 23 12.5 19.5 Q14 16.5 16.5 16.5 Z" fill="#3a74c4"/><path d="M14 18 Q12.5 20 12.5 21.5" stroke="#fff" stroke-width="1" fill="none"/></svg>
<div class="a t" style="top:105px;font-size:12px;line-height:17px;color:#444;left:954px;letter-spacing:-0.168px;">Format as</div>
<div class="a t" style="top:121px;font-size:12px;line-height:17px;color:#444;left:961.5px;letter-spacing:-0.438px;">Table</div>
<svg class="a" style="left:991.3px;top:125.6px;" width="7.4" height="4.8" viewBox="0 0 7.4 4.8"><path d="M1 1 L3.7 3.8 L6.4 1" fill="none" stroke="#505050" stroke-width="1.25"/></svg>
<div class="a" style="left:1011px;top:70px;width:442px;height:62px;background:#fff;border:1px solid #e1dfdd;box-sizing:border-box;"></div>
<div class="a" style="left:1013px;top:73px;width:105px;height:28px;background:#fff;border:2px solid #b0aeac;box-sizing:border-box;"></div>
<div class="a" style="left:1015px;top:75px;width:101px;height:24px;border:1px solid #d8d6d4;box-sizing:border-box;"></div>
<div class="a t" style="top:77px;font-size:13.5px;line-height:19px;color:#111;left:1019.5px;letter-spacing:0.331px;">Normal</div>
<div class="a" style="left:1121px;top:76px;width:100px;height:22px;background:#ffc7ce;"></div>
<div class="a t" style="top:77px;font-size:13.5px;line-height:19px;color:#9c0006;left:1125px;letter-spacing:-0.344px;">Bad</div>
<div class="a" style="left:1227px;top:76px;width:100px;height:22px;background:#c6efce;"></div>
<div class="a t" style="top:77px;font-size:13.5px;line-height:19px;color:#006100;left:1231px;letter-spacing:-0.008px;">Good</div>
<div class="a" style="left:1333px;top:76px;width:100px;height:22px;background:#ffeb9c;"></div>
<div class="a t" style="top:77px;font-size:13.5px;line-height:19px;color:#9c5700;left:1337px;letter-spacing:0.496px;">Neutral</div>
<div class="a" style="left:1015px;top:104px;width:100px;height:22px;background:#f2f2f2;border:1px solid #7f7f7f;box-sizing:border-box;"></div>
<div class="a t" style="top:105px;font-size:13.5px;line-height:19px;color:#fa7d00;left:1019px;font-weight:bold;letter-spacing:-0.342px;">Calculation</div>
<div class="a" style="left:1121px;top:104px;width:100px;height:22px;background:#a5a5a5;border:1px solid #3f3f3f;box-sizing:border-box;"></div>
<div class="a" style="left:1123px;top:106px;width:96px;height:18px;border:1px solid #3f3f3f;box-sizing:border-box;"></div>
<div class="a t" style="top:105px;font-size:13.5px;line-height:19px;color:#fff;left:1125.5px;font-weight:bold;letter-spacing:-0.553px;">Check Cell</div>
<div class="a t" style="top:105px;font-size:13.5px;line-height:19px;color:#7f7f7f;left:1232px;font-style:italic;letter-spacing:0.047px;">Explanatory ...</div>
<div class="a" style="left:1333px;top:104px;width:100px;height:22px;background:#ffcc99;border:1px solid #7f7f7f;box-sizing:border-box;"></div>
<div class="a t" style="top:105px;font-size:13.5px;line-height:19px;color:#3f3f76;left:1337px;letter-spacing:0.594px;">Input</div>
<div class="a" style="left:1437px;top:70px;width:15px;height:62px;background:#fff;border:1px solid #e1dfdd;box-sizing:border-box;"></div>
<div class="a" style="left:1438px;top:71px;width:13px;height:20px;background:#e1dfdd;"></div>
<svg class="a" style="left:1441px;top:79px;" width="7" height="4" viewBox="0 0 7 4"><path d="M0 4 L3.5 0 L7 4 Z" fill="#c8c6c4"/></svg>
<div class="a" style="left:1437px;top:91px;width:15px;height:1px;background:#e1dfdd;"></div>
<svg class="a" style="left:1441.5px;top:99.5px;" width="6" height="3" viewBox="0 0 6 3"><path d="M0 0 L6 0 L3 3 Z" fill="#555"/></svg>
<div class="a" style="left:1437px;top:110px;width:15px;height:1px;background:#e1dfdd;"></div>
<div class="a" style="left:1441.5px;top:117.5px;width:6px;height:1.2px;background:#555;"></div>
<svg class="a" style="left:1441.5px;top:120.5px;" width="6" height="3" viewBox="0 0 6 3"><path d="M0 0 L6 0 L3 3 Z" fill="#555"/></svg>
<div class="a t" style="top:145px;font-size:12px;line-height:17px;color:#444;left:1151px;letter-spacing:-0.531px;">Styles</div>
<div class="a" style="left:1462px;top:68px;width:1px;height:89px;background:#d2d0ce;"></div>
<svg class="a" style="left:1479px;top:72px;" width="28" height="28" viewBox="0 0 28 28"><rect x="0.5" y="0.5" width="14" height="5" fill="#fff" stroke="#6a6a6a" stroke-width="1"/><path d="M7.5 0.5 V5.5" stroke="#6a6a6a" stroke-width="1"/><rect x="0.5" y="16.5" width="14" height="10" fill="#fff" stroke="#6a6a6a" stroke-width="1"/><path d="M7.5 16.5 V26.5" stroke="#6a6a6a" stroke-width="1"/><path d="M0.5 21.5 H14.5" stroke="#6a6a6a" stroke-width="1"/><rect x="12" y="8.5" width="14" height="5" fill="#b4c7e7" stroke="#8a9ab8" stroke-width="1"/><path d="M19 8.5 V13.5" stroke="#8a9ab8" stroke-width="1"/><path d="M2 11 H9 M5 8 L2 11 L5 14" fill="none" stroke="#3a74c4" stroke-width="1.5"/></svg>
<div class="a t" style="top:104.5px;font-size:12px;line-height:17px;color:#444;left:1477.5px;letter-spacing:-0.253px;">Insert</div>
<svg class="a" style="left:1487.8px;top:125.6px;" width="7.4" height="4.8" viewBox="0 0 7.4 4.8"><path d="M1 1 L3.7 3.8 L6.4 1" fill="none" stroke="#505050" stroke-width="1.25"/></svg>
<svg class="a" style="left:1520px;top:72px;" width="31" height="29" viewBox="0 0 31 29"><rect x="0.5" y="0.5" width="14" height="5" fill="#fff" stroke="#6a6a6a" stroke-width="1"/><path d="M7.5 0.5 V5.5" stroke="#6a6a6a" stroke-width="1"/><rect x="0.5" y="17.5" width="14" height="10" fill="#fff" stroke="#6a6a6a" stroke-width="1"/><path d="M7.5 17.5 V27.5" stroke="#6a6a6a" stroke-width="1"/><path d="M0.5 22.5 H14.5" stroke="#6a6a6a" stroke-width="1"/><rect x="6.5" y="8.5" width="9" height="5" fill="#b4c7e7" stroke="#8a9ab8" stroke-width="1"/><path d="M16 6.5 L29 18 M29 6.5 L16 18" stroke="#d9534a" stroke-width="2"/></svg>
<div class="a t" style="top:104.5px;font-size:12px;line-height:17px;color:#444;left:1517.5px;letter-spacing:-0.365px;">Delete</div>
<svg class="a" style="left:1529.8px;top:125.6px;" width="7.4" height="4.8" viewBox="0 0 7.4 4.8"><path d="M1 1 L3.7 3.8 L6.4 1" fill="none" stroke="#505050" stroke-width="1.25"/></svg>
<svg class="a" style="left:1561px;top:71px;" width="29" height="31" viewBox="0 0 29 31"><path d="M1.5 2.5 H21.5 M1.5 0 V5 M21.5 0 V5 M4 0.5 L1.8 2.5 L4 4.5 M19 0.5 L21.2 2.5 L19 4.5" fill="none" stroke="#3a74c4" stroke-width="1"/><rect x="0.5" y="6.5" width="27" height="20" fill="#fff" stroke="#8a8a8a" stroke-width="1"/><path d="M7.25 6.5 V26.5" stroke="#8a8a8a" stroke-width="1"/><path d="M14 6.5 V26.5" stroke="#8a8a8a" stroke-width="1"/><path d="M20.75 6.5 V26.5" stroke="#8a8a8a" stroke-width="1"/><path d="M0.5 13.1667 H27.5" stroke="#8a8a8a" stroke-width="1"/><path d="M0.5 19.8333 H27.5" stroke="#8a8a8a" stroke-width="1"/><rect x="8" y="12" width="6.5" height="9" fill="#3a74c4"/><path d="M0.5 26.5 V30 H7 Q8 30 8 28.5 H9.5 V30 H16 Q17 30 17 28.5" fill="none" stroke="#8a8a8a" stroke-width="1"/></svg>
<div class="a t" style="top:104.5px;font-size:12px;line-height:17px;color:#444;left:1557.5px;letter-spacing:-0.086px;">Format</div>
<svg class="a" style="left:1571.8px;top:125.6px;" width="7.4" height="4.8" viewBox="0 0 7.4 4.8"><path d="M1 1 L3.7 3.8 L6.4 1" fill="none" stroke="#505050" stroke-width="1.25"/></svg>
<div class="a t" style="top:145px;font-size:12px;line-height:17px;color:#444;left:1522.5px;letter-spacing:-0.634px;">Cells</div>
<div class="a" style="left:1605px;top:68px;width:1px;height:89px;background:#d2d0ce;"></div>
<svg class="a" style="left:1616px;top:70px;" width="17" height="16" viewBox="0 0 17 16"><path d="M14.5 3.5 V1 H1.5 L8.5 8 L1.5 15 H14.5 V12.5" fill="none" stroke="#3b3b3b" stroke-width="1.8"/></svg>
<div class="a t" style="top:70.5px;font-size:12px;line-height:17px;color:#444;left:1636.5px;letter-spacing:-0.051px;">AutoSum</div>
<svg class="a" style="left:1695.8px;top:75.6px;" width="7.4" height="4.8" viewBox="0 0 7.4 4.8"><path d="M1 1 L3.7 3.8 L6.4 1" fill="none" stroke="#505050" stroke-width="1.25"/></svg>
<svg class="a" style="left:1617px;top:93px;" width="16" height="16" viewBox="0 0 16 16"><rect x="1" y="1" width="13.5" height="14" fill="#fff" stroke="#6a6a6a" stroke-width="1"/><rect x="1" y="1" width="13.5" height="3" fill="#6a6a6a"/><path d="M7.75 6 V12.5 M4.8 9.8 L7.75 12.7 L10.7 9.8" fill="none" stroke="#3a74c4" stroke-width="1.5"/></svg>
<div class="a t" style="top:93px;font-size:12px;line-height:17px;color:#444;left:1636.5px;letter-spacing:-0.332px;">Fill</div>
<svg class="a" style="left:1653.8px;top:98.6px;" width="7.4" height="4.8" viewBox="0 0 7.4 4.8"><path d="M1 1 L3.7 3.8 L6.4 1" fill="none" stroke="#505050" stroke-width="1.25"/></svg>
<svg class="a" style="left:1617px;top:116px;" width="16" height="14" viewBox="0 0 16 14"><path d="M1.5 9 L9.5 1.5 L14 6 L6 13 Z" fill="#f08ca8"/><path d="M1.5 9 L4 6.6 L8.5 11 L6 13 Z" fill="#e05a80"/></svg>
<div class="a t" style="top:116.5px;font-size:12px;line-height:17px;color:#444;left:1636.5px;letter-spacing:-0.438px;">Clear</div>
<svg class="a" style="left:1665.8px;top:122.1px;" width="7.4" height="4.8" viewBox="0 0 7.4 4.8"><path d="M1 1 L3.7 3.8 L6.4 1" fill="none" stroke="#505050" stroke-width="1.25"/></svg>
<svg class="a" style="left:1713px;top:71px;" width="33" height="30" viewBox="0 0 33 30"><text x="1.5" y="13.6" font-size="16" font-family="Liberation Sans" fill="#3b70b0">A</text><text x="2.5" y="27.4" font-size="15" font-family="Liberation Sans" fill="#a050a8">Z</text><path d="M14.5 9 H31 L24.8 15.5 V23.5 L21.2 21.5 V15.5 Z" fill="#7a7a7a"/></svg>
<div class="a t" style="top:104.5px;font-size:12px;line-height:17px;color:#444;left:1713px;letter-spacing:0.107px;">Sort &amp;</div>
<div class="a t" style="top:121px;font-size:12px;line-height:17px;color:#444;left:1711.5px;letter-spacing:-0.195px;">Filter</div>
<svg class="a" style="left:1739.8px;top:125.6px;" width="7.4" height="4.8" viewBox="0 0 7.4 4.8"><path d="M1 1 L3.7 3.8 L6.4 1" fill="none" stroke="#505050" stroke-width="1.25"/></svg>
<svg class="a" style="left:1758px;top:71px;" width="32" height="30" viewBox="0 0 32 30"><circle cx="20" cy="10" r="8.5" fill="#fff" stroke="#3a74c4" stroke-width="2"/><path d="M13.5 16.5 L2 27.5" stroke="#3a74c4" stroke-width="3.2"/></svg>
<div class="a t" style="top:104.5px;font-size:12px;line-height:17px;color:#444;left:1756.5px;letter-spacing:0.135px;">Find &amp;</div>
<div class="a t" style="top:121px;font-size:12px;line-height:17px;color:#444;left:1753.5px;letter-spacing:-0.477px;">Select</div>
<svg class="a" style="left:1786.8px;top:125.6px;" width="7.4" height="4.8" viewBox="0 0 7.4 4.8"><path d="M1 1 L3.7 3.8 L6.4 1" fill="none" stroke="#505050" stroke-width="1.25"/></svg>
<div class="a t" style="top:145px;font-size:12px;line-height:17px;color:#444;left:1687.5px;letter-spacing:-0.029px;">Editing</div>
<div class="a" style="left:1805px;top:68px;width:1px;height:89px;background:#d2d0ce;"></div>
<svg class="a" style="left:1901px;top:150px;" width="12" height="7" viewBox="0 0 12 7"><path d="M1 5.6 L5.7 1.2 L10.4 5.6" fill="none" stroke="#444" stroke-width="1.3"/></svg>
<svg class="a" style="left:9px;top:165px;" width="22" height="22" viewBox="0 0 22 22"><circle cx="11" cy="10.5" r="10.5" fill="#3b78c8"/><rect x="9.7" y="8.5" width="2.6" height="8.5" rx="0.8" fill="#fff"/><circle cx="11" cy="5.2" r="1.6" fill="#fff"/></svg>
<div class="a t" style="top:168px;font-size:11px;line-height:17px;color:#333;left:40px;letter-spacing:-0.221px;-webkit-text-stroke:0.3px #333;">GET GENUINE OFFICE</div>
<div class="a t" style="top:168px;font-size:12px;line-height:17px;color:#333;left:165px;letter-spacing:0.025px;text-decoration:underline;">Your license isn&#x27;t genuine, and you may be a victim of software counterfeiting. Avoid interruption and keep your files safe with genuine Office today.</div>
<div class="a" style="left:968px;top:164px;width:133px;height:22px;background:#fff;border:1px solid #c4c2a4;box-sizing:border-box;"></div>
<div class="a t" style="top:168px;font-size:12px;line-height:17px;color:#333;left:984px;letter-spacing:0.009px;">Get genuine Office</div>
<div class="a" style="left:1110px;top:164px;width:94px;height:22px;background:#fff;border:1px solid #c4c2a4;box-sizing:border-box;"></div>
<div class="a t" style="top:168px;font-size:12px;line-height:17px;color:#333;left:1126px;letter-spacing:-0.037px;">Learn more</div>
<svg class="a" style="left:1901px;top:171px;" width="9" height="9" viewBox="0 0 9 9"><path d="M1 1 L8 8 M8 1 L1 8" stroke="#333" stroke-width="1.6"/></svg>
<div class="a" style="left:5px;top:200px;width:102px;height:25px;background:#fff;border:1px solid #d6d6d6;box-sizing:border-box;"></div>
<div class="a t" style="top:204px;font-size:13px;line-height:18px;color:#444;left:12.5px;letter-spacing:0.297px;">A1</div>
<svg class="a" style="left:92.5px;top:210.5px;" width="7" height="4" viewBox="0 0 7 4"><path d="M0 0 L7 0 L3.5 4 Z" fill="#666"/></svg>
<div class="a" style="left:121px;top:208px;width:2px;height:2px;background:#a6a6a6;"></div>
<div class="a" style="left:121px;top:212px;width:2px;height:2px;background:#a6a6a6;"></div>
<div class="a" style="left:121px;top:216px;width:2px;height:2px;background:#a6a6a6;"></div>
<div class="a" style="left:137px;top:200px;width:110px;height:25px;background:#fff;border:1px solid #d6d6d6;box-sizing:border-box;"></div>
<svg class="a" style="left:150px;top:208px;" width="10" height="10" viewBox="0 0 10 10"><path d="M1 1 L9 9 M9 1 L1 9" stroke="#c0c0c0" stroke-width="1.4"/></svg>
<svg class="a" style="left:186px;top:207px;" width="13" height="11" viewBox="0 0 13 11"><path d="M1 6 L4.5 10 L12 1" fill="none" stroke="#c0c0c0" stroke-width="1.6"/></svg>
<div class="a t" style="top:201.5px;font-size:15px;line-height:21px;color:#555;left:223px;font-style:italic;font-family:'Liberation Serif',serif;">f</div>
<div class="a t" style="top:207.5px;font-size:10px;line-height:14px;color:#555;left:228.5px;font-style:italic;font-family:'Liberation Serif',serif;">x</div>
<div class="a" style="left:251px;top:200px;width:1663px;height:46px;background:#fff;border:1px solid #d6d6d6;box-sizing:border-box;"></div>
<div class="a t" dir="rtl" style="right:28px;top:204px;font-size:13.2px;line-height:20px;color:#333;font-family:'DejaVu Sans','Liberation Sans',sans-serif;transform:scaleX(.94);transform-origin:right">نام صنف</div>
<svg class="a" style="left:1901px;top:209px;" width="10" height="7" viewBox="0 0 10 7"><path d="M1 6 L5 1.5 L9 6" fill="none" stroke="#444" stroke-width="1.6"/></svg>
<svg class="a" style="left:25px;top:998px;" width="6" height="10" viewBox="0 0 6 10"><path d="M5.5 0.5 L0.5 5 L5.5 9.5 Z" fill="#c6c6c6"/></svg>
<svg class="a" style="left:55.5px;top:998px;" width="6" height="10" viewBox="0 0 6 10"><path d="M0.5 0.5 L5.5 5 L0.5 9.5 Z" fill="#c6c6c6"/></svg>
<div class="a" style="left:100px;top:991px;width:65px;height:24px;background:#fff;"></div>
<div class="a" style="left:100px;top:991px;width:1px;height:24px;background:#c6c6c6;"></div>
<div class="a" style="left:164px;top:991px;width:1px;height:24px;background:#c6c6c6;"></div>
<div class="a" style="left:100px;top:1013px;width:65px;height:2px;background:#217346;"></div>
<div class="a t" style="top:994.5px;font-size:12.5px;line-height:18px;color:#217346;left:111.5px;font-weight:bold;letter-spacing:0.000px;">Sheet1</div>
<svg class="a" style="left:197px;top:995px;" width="18" height="18" viewBox="0 0 18 18"><circle cx="9" cy="9" r="7.5" fill="none" stroke="#777" stroke-width="1.1"/><path d="M9 4.8 V13.2 M4.8 9 H13.2" stroke="#777" stroke-width="1.3"/></svg>
<div class="a" style="left:1152px;top:999px;width:2px;height:2px;background:#b4b4b4;"></div>
<div class="a" style="left:1152px;top:1003px;width:2px;height:2px;background:#b4b4b4;"></div>
<div class="a" style="left:1152px;top:1007px;width:2px;height:2px;background:#b4b4b4;"></div>
<div class="a" style="left:1169px;top:997px;width:15px;height:15px;background:#fff;border:1px solid #777;box-sizing:border-box;"></div>
<svg class="a" style="left:1174px;top:1000px;" width="5" height="8" viewBox="0 0 5 8"><path d="M5 0 L0.5 4 L5 8 Z" fill="#606060"/></svg>
<div class="a" style="left:1853px;top:998px;width:30px;height:13px;background:#dadada;"></div>
<div class="a" style="left:1184px;top:997px;width:668px;height:15px;background:#fff;border:1px solid #777;box-sizing:border-box;"></div>
<div class="a" style="left:1884px;top:997px;width:15px;height:15px;background:#fff;border:1px solid #777;box-sizing:border-box;"></div>
<svg class="a" style="left:1889px;top:1000px;" width="5" height="8" viewBox="0 0 5 8"><path d="M0 0 L4.5 4 L0 8 Z" fill="#606060"/></svg>
<div class="a t" style="top:1021.8px;font-size:12px;line-height:17px;color:#444;left:7px;letter-spacing:-0.637px;">Ready</div>
<div class="a" style="left:1617px;top:1018px;width:40px;height:21px;background:#c8c8c8;"></div>
<svg class="a" style="left:1630px;top:1022px;" width="13" height="13" viewBox="0 0 13 13"><rect x="0.5" y="0.5" width="12" height="12" fill="none" stroke="#3c3c3c" stroke-width="1"/><path d="M4.5 0.5 V12.5" stroke="#3c3c3c" stroke-width="1"/><path d="M8.5 0.5 V12.5" stroke="#3c3c3c" stroke-width="1"/><path d="M0.5 4.5 H12.5" stroke="#3c3c3c" stroke-width="1"/><path d="M0.5 8.5 H12.5" stroke="#3c3c3c" stroke-width="1"/></svg>
<svg class="a" style="left:1670px;top:1022px;" width="15" height="14" viewBox="0 0 15 14"><rect x="0.5" y="0.5" width="14" height="13" fill="none" stroke="#444" stroke-width="1"/><rect x="3.5" y="3.5" width="8" height="7" fill="none" stroke="#444" stroke-width="1"/><path d="M5.5 5.5 H9.5 M5.5 7.5 H9.5" stroke="#444" stroke-width="1"/></svg>
<svg class="a" style="left:1710px;top:1022px;" width="15" height="14" viewBox="0 0 15 14"><path d="M0.5 13.5 V0.5 H14.5 V13.5" fill="none" stroke="#444" stroke-width="1"/><path d="M5.5 0.5 V8.5 H0.5 M9.5 0.5 V8.5 H5.5" fill="none" stroke="#444" stroke-width="1"/><path d="M0.5 13.5 H14.5" stroke="#444" stroke-width="1" stroke-dasharray="2 1"/></svg>
<div class="a" style="left:1743px;top:1028.5px;width:8px;height:1.2px;background:#555;"></div>
<div class="a" style="left:1756px;top:1028.5px;width:101px;height:1px;background:#777;"></div>
<div class="a" style="left:1804px;top:1023px;width:4px;height:12px;background:#666;"></div>
<div class="a" style="left:1860px;top:1028.5px;width:9px;height:1.2px;background:#555;"></div>
<div class="a" style="left:1863.9px;top:1024.5px;width:1.2px;height:9px;background:#555;"></div>
<div class="a t" style="top:1021.8px;font-size:12px;line-height:17px;color:#444;left:1883px;letter-spacing:-0.906px;">100 %</div>
</body></html>
